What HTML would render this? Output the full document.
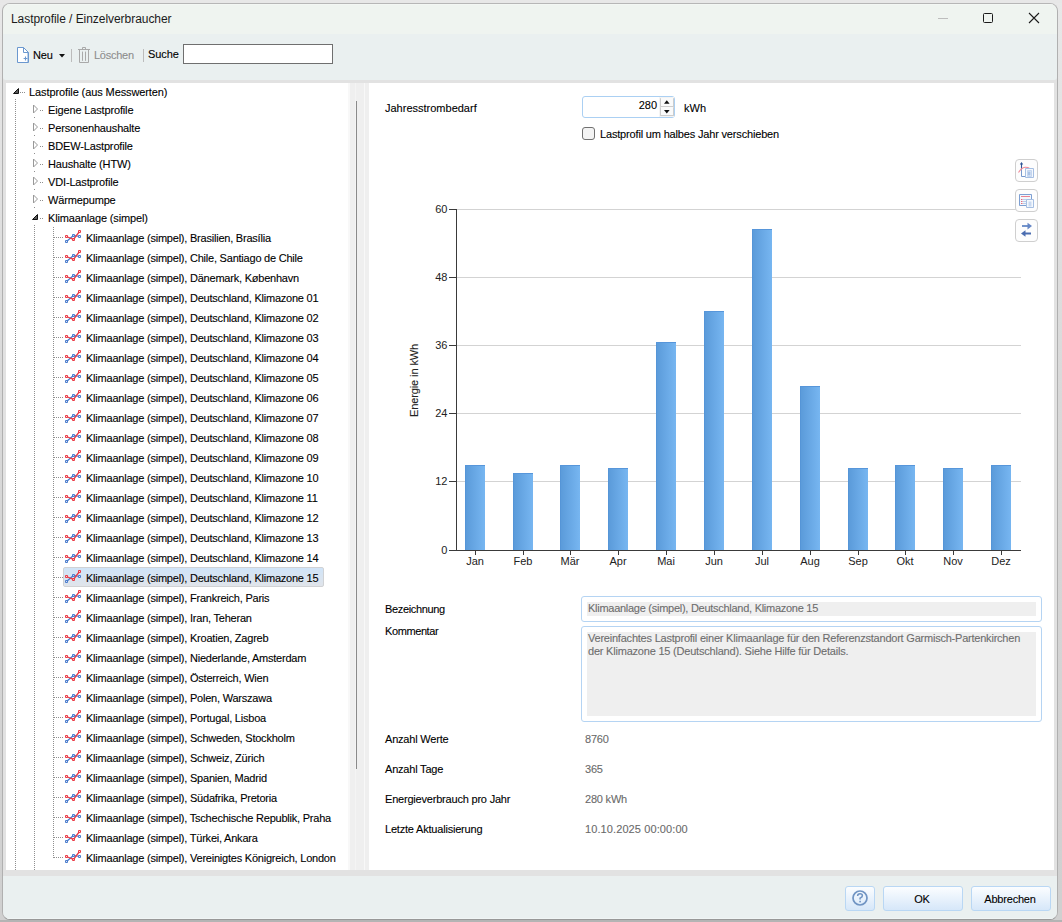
<!DOCTYPE html><html><head><meta charset="utf-8"><style>
*{margin:0;padding:0;box-sizing:border-box}
html,body{width:1062px;height:922px;overflow:hidden;background:linear-gradient(#e8e8e8 0px,#e4e4e4 90px,#d9d9d9 400px,#d0d0d0 900px);font-family:"Liberation Sans",sans-serif;font-size:11px;color:#000}
.a{position:absolute}
.t{position:absolute;white-space:nowrap;line-height:13px;font-size:11px;-webkit-text-stroke:0.1px currentColor}
.tr{letter-spacing:-0.22px}
.bar{position:absolute;width:20px;background:linear-gradient(to right,#4f8fd4 0px,#5b9bda 1px,#77b6f1 20px);border-top:1px solid #5796da}
.gl{position:absolute;left:457px;width:564px;height:1px;background:#d3d3d3}
.yt{position:absolute;left:449px;width:7px;height:1px;background:#3a3a3a}
.xt{position:absolute;top:551px;width:1px;height:4px;background:#3a3a3a}
.yl{position:absolute;width:30px;text-align:right;left:417px;font-size:11px;line-height:13px;color:#222;letter-spacing:-0.3px}
.xl{position:absolute;width:40px;text-align:center;top:555px;font-size:11px;line-height:13px;color:#222}
.cbtn{position:absolute;left:1015px;width:23px;height:23px;border:1px solid #cfcfcf;border-radius:4px;background:#fdfdfd}
.btn{position:absolute;top:886px;height:25px;border:1px solid #b9d7f4;border-radius:3px;background:linear-gradient(#fbfdff,#d6e7f9);text-align:center;line-height:25px;font-size:11px;color:#000;padding-right:2px;-webkit-text-stroke:0.1px currentColor}
.lbl{position:absolute;left:385px;white-space:nowrap;line-height:13px;-webkit-text-stroke:0.1px currentColor}
.val{position:absolute;left:585px;white-space:nowrap;line-height:13px;color:#6a6a6a;-webkit-text-stroke:0.1px currentColor}
</style></head><body>
<div class="a" style="left:0;top:0;width:1062px;height:3px;background:#e7e7e7"></div>
<div class="a" style="left:0;top:920px;width:1062px;height:2px;background:#b4b4b4"></div>
<div class="a" style="left:2px;top:3px;width:1056px;height:917px;border:1px solid #b0b0b0;border-top-color:#b6b6b6;border-bottom-color:#989898;border-radius:8px;background:#e2e2e2;overflow:hidden">
<div class="a" style="left:0;top:0;width:1054px;height:30px;background:#eff4f0;border-top:1px solid #f3f7f4"></div>
<div class="a" style="left:0;top:30px;width:1054px;height:46px;background:#eaf0f0;border-radius:0 0 3px 3px"></div>
<div class="a" style="left:0;top:872px;width:1054px;height:43px;background:#eaf0f0;border-bottom:1px solid #f0f5f5"></div>
</div>
<div class="t" style="left:11px;top:12px;font-size:12px;line-height:15px;color:#1b1b1b;letter-spacing:-0.05px;-webkit-text-stroke:0">Lastprofile / Einzelverbraucher</div>
<div class="a" style="left:938px;top:18px;width:10px;height:1px;background:#bdbdbd"></div>
<div class="a" style="left:983px;top:13px;width:10px;height:10px;border:1px solid #1b1b1b;border-radius:1.5px"></div>
<svg class="a" style="left:1028px;top:12px" width="12" height="12" viewBox="0 0 12 12"><path d="M1 1L11 11M11 1L1 11" stroke="#1b1b1b" stroke-width="1.1"/></svg>
<svg class="a" style="left:17px;top:47px" width="13" height="16" viewBox="0 0 13 16"><path d="M0.5 0.5H6.5L11.5 5.5V15.5H0.5Z" fill="#fff" stroke="#6b98cf" stroke-width="1" stroke-linejoin="round"/><path d="M10.5 6V15" stroke="#b9cfea" stroke-width="1"/><path d="M6.5 0.5V5.5H11.5" fill="none" stroke="#6b98cf" stroke-width="1"/><path d="M8.5 9.6V13.4M6.6 11.5H10.4" stroke="#6b98cf" stroke-width="1.1"/></svg>
<div class="t" style="left:33px;top:49px;letter-spacing:-0.2px">Neu</div>
<svg class="a" style="left:59px;top:54px" width="6" height="4" viewBox="0 0 6 4"><path d="M0 0H6L3 3.5Z" fill="#111"/></svg>
<div class="a" style="left:71px;top:49px;width:1px;height:13px;background:#bcbcbc"></div>
<svg class="a" style="left:78px;top:47px" width="12" height="16" viewBox="0 0 12 16"><path d="M4.5 2.5V0.5H7.5V2.5M0 2.5H12M1.5 2.5V15.5H10.5V2.5M4.5 4.6V13.8M7.5 4.6V13.8" fill="none" stroke="#a9a9a9" stroke-width="1"/></svg>
<div class="t" style="left:94px;top:49px;color:#8d8d8d;letter-spacing:-0.25px">Löschen</div>
<div class="a" style="left:143px;top:49px;width:1px;height:13px;background:#bcbcbc"></div>
<div class="t" style="left:148px;top:48px;letter-spacing:-0.1px">Suche</div>
<div class="a" style="left:183px;top:44px;width:150px;height:20px;border:1px solid #6f6f6f;background:#fff"></div>
<div class="a" style="left:6px;top:83px;width:342px;height:787px;background:#fff"></div>
<div class="a" style="left:348px;top:83px;width:21px;height:787px;background:#efefef;border-left:2px solid #f8f8f8"></div>
<div class="a" style="left:355px;top:83px;width:1px;height:787px;background:#f4f4f4"></div>
<div class="a" style="left:364px;top:83px;width:1px;height:787px;background:#f8f8f8"></div>
<div class="a" style="left:356px;top:101px;width:1px;height:668px;background:#8a8a8a"></div>
<div class="a" style="left:369px;top:83px;width:685px;height:787px;background:#fff"></div>
<svg class="a" style="left:0;top:0" width="400" height="880"><path fill="#8f8f8f" d="M15 99h1v1h-1zM15 101h1v1h-1zM15 103h1v1h-1zM15 105h1v1h-1zM15 107h1v1h-1zM15 109h1v1h-1zM15 111h1v1h-1zM15 113h1v1h-1zM15 115h1v1h-1zM15 117h1v1h-1zM15 119h1v1h-1zM15 121h1v1h-1zM15 123h1v1h-1zM15 125h1v1h-1zM15 127h1v1h-1zM15 129h1v1h-1zM15 131h1v1h-1zM15 133h1v1h-1zM15 135h1v1h-1zM15 137h1v1h-1zM15 139h1v1h-1zM15 141h1v1h-1zM15 143h1v1h-1zM15 145h1v1h-1zM15 147h1v1h-1zM15 149h1v1h-1zM15 151h1v1h-1zM15 153h1v1h-1zM15 155h1v1h-1zM15 157h1v1h-1zM15 159h1v1h-1zM15 161h1v1h-1zM15 163h1v1h-1zM15 165h1v1h-1zM15 167h1v1h-1zM15 169h1v1h-1zM15 171h1v1h-1zM15 173h1v1h-1zM15 175h1v1h-1zM15 177h1v1h-1zM15 179h1v1h-1zM15 181h1v1h-1zM15 183h1v1h-1zM15 185h1v1h-1zM15 187h1v1h-1zM15 189h1v1h-1zM15 191h1v1h-1zM15 193h1v1h-1zM15 195h1v1h-1zM15 197h1v1h-1zM15 199h1v1h-1zM15 201h1v1h-1zM15 203h1v1h-1zM15 205h1v1h-1zM15 207h1v1h-1zM15 209h1v1h-1zM15 211h1v1h-1zM15 213h1v1h-1zM15 215h1v1h-1zM15 217h1v1h-1zM15 219h1v1h-1zM15 221h1v1h-1zM15 223h1v1h-1zM15 225h1v1h-1zM15 227h1v1h-1zM15 229h1v1h-1zM15 231h1v1h-1zM15 233h1v1h-1zM15 235h1v1h-1zM15 237h1v1h-1zM15 239h1v1h-1zM15 241h1v1h-1zM15 243h1v1h-1zM15 245h1v1h-1zM15 247h1v1h-1zM15 249h1v1h-1zM15 251h1v1h-1zM15 253h1v1h-1zM15 255h1v1h-1zM15 257h1v1h-1zM15 259h1v1h-1zM15 261h1v1h-1zM15 263h1v1h-1zM15 265h1v1h-1zM15 267h1v1h-1zM15 269h1v1h-1zM15 271h1v1h-1zM15 273h1v1h-1zM15 275h1v1h-1zM15 277h1v1h-1zM15 279h1v1h-1zM15 281h1v1h-1zM15 283h1v1h-1zM15 285h1v1h-1zM15 287h1v1h-1zM15 289h1v1h-1zM15 291h1v1h-1zM15 293h1v1h-1zM15 295h1v1h-1zM15 297h1v1h-1zM15 299h1v1h-1zM15 301h1v1h-1zM15 303h1v1h-1zM15 305h1v1h-1zM15 307h1v1h-1zM15 309h1v1h-1zM15 311h1v1h-1zM15 313h1v1h-1zM15 315h1v1h-1zM15 317h1v1h-1zM15 319h1v1h-1zM15 321h1v1h-1zM15 323h1v1h-1zM15 325h1v1h-1zM15 327h1v1h-1zM15 329h1v1h-1zM15 331h1v1h-1zM15 333h1v1h-1zM15 335h1v1h-1zM15 337h1v1h-1zM15 339h1v1h-1zM15 341h1v1h-1zM15 343h1v1h-1zM15 345h1v1h-1zM15 347h1v1h-1zM15 349h1v1h-1zM15 351h1v1h-1zM15 353h1v1h-1zM15 355h1v1h-1zM15 357h1v1h-1zM15 359h1v1h-1zM15 361h1v1h-1zM15 363h1v1h-1zM15 365h1v1h-1zM15 367h1v1h-1zM15 369h1v1h-1zM15 371h1v1h-1zM15 373h1v1h-1zM15 375h1v1h-1zM15 377h1v1h-1zM15 379h1v1h-1zM15 381h1v1h-1zM15 383h1v1h-1zM15 385h1v1h-1zM15 387h1v1h-1zM15 389h1v1h-1zM15 391h1v1h-1zM15 393h1v1h-1zM15 395h1v1h-1zM15 397h1v1h-1zM15 399h1v1h-1zM15 401h1v1h-1zM15 403h1v1h-1zM15 405h1v1h-1zM15 407h1v1h-1zM15 409h1v1h-1zM15 411h1v1h-1zM15 413h1v1h-1zM15 415h1v1h-1zM15 417h1v1h-1zM15 419h1v1h-1zM15 421h1v1h-1zM15 423h1v1h-1zM15 425h1v1h-1zM15 427h1v1h-1zM15 429h1v1h-1zM15 431h1v1h-1zM15 433h1v1h-1zM15 435h1v1h-1zM15 437h1v1h-1zM15 439h1v1h-1zM15 441h1v1h-1zM15 443h1v1h-1zM15 445h1v1h-1zM15 447h1v1h-1zM15 449h1v1h-1zM15 451h1v1h-1zM15 453h1v1h-1zM15 455h1v1h-1zM15 457h1v1h-1zM15 459h1v1h-1zM15 461h1v1h-1zM15 463h1v1h-1zM15 465h1v1h-1zM15 467h1v1h-1zM15 469h1v1h-1zM15 471h1v1h-1zM15 473h1v1h-1zM15 475h1v1h-1zM15 477h1v1h-1zM15 479h1v1h-1zM15 481h1v1h-1zM15 483h1v1h-1zM15 485h1v1h-1zM15 487h1v1h-1zM15 489h1v1h-1zM15 491h1v1h-1zM15 493h1v1h-1zM15 495h1v1h-1zM15 497h1v1h-1zM15 499h1v1h-1zM15 501h1v1h-1zM15 503h1v1h-1zM15 505h1v1h-1zM15 507h1v1h-1zM15 509h1v1h-1zM15 511h1v1h-1zM15 513h1v1h-1zM15 515h1v1h-1zM15 517h1v1h-1zM15 519h1v1h-1zM15 521h1v1h-1zM15 523h1v1h-1zM15 525h1v1h-1zM15 527h1v1h-1zM15 529h1v1h-1zM15 531h1v1h-1zM15 533h1v1h-1zM15 535h1v1h-1zM15 537h1v1h-1zM15 539h1v1h-1zM15 541h1v1h-1zM15 543h1v1h-1zM15 545h1v1h-1zM15 547h1v1h-1zM15 549h1v1h-1zM15 551h1v1h-1zM15 553h1v1h-1zM15 555h1v1h-1zM15 557h1v1h-1zM15 559h1v1h-1zM15 561h1v1h-1zM15 563h1v1h-1zM15 565h1v1h-1zM15 567h1v1h-1zM15 569h1v1h-1zM15 571h1v1h-1zM15 573h1v1h-1zM15 575h1v1h-1zM15 577h1v1h-1zM15 579h1v1h-1zM15 581h1v1h-1zM15 583h1v1h-1zM15 585h1v1h-1zM15 587h1v1h-1zM15 589h1v1h-1zM15 591h1v1h-1zM15 593h1v1h-1zM15 595h1v1h-1zM15 597h1v1h-1zM15 599h1v1h-1zM15 601h1v1h-1zM15 603h1v1h-1zM15 605h1v1h-1zM15 607h1v1h-1zM15 609h1v1h-1zM15 611h1v1h-1zM15 613h1v1h-1zM15 615h1v1h-1zM15 617h1v1h-1zM15 619h1v1h-1zM15 621h1v1h-1zM15 623h1v1h-1zM15 625h1v1h-1zM15 627h1v1h-1zM15 629h1v1h-1zM15 631h1v1h-1zM15 633h1v1h-1zM15 635h1v1h-1zM15 637h1v1h-1zM15 639h1v1h-1zM15 641h1v1h-1zM15 643h1v1h-1zM15 645h1v1h-1zM15 647h1v1h-1zM15 649h1v1h-1zM15 651h1v1h-1zM15 653h1v1h-1zM15 655h1v1h-1zM15 657h1v1h-1zM15 659h1v1h-1zM15 661h1v1h-1zM15 663h1v1h-1zM15 665h1v1h-1zM15 667h1v1h-1zM15 669h1v1h-1zM15 671h1v1h-1zM15 673h1v1h-1zM15 675h1v1h-1zM15 677h1v1h-1zM15 679h1v1h-1zM15 681h1v1h-1zM15 683h1v1h-1zM15 685h1v1h-1zM15 687h1v1h-1zM15 689h1v1h-1zM15 691h1v1h-1zM15 693h1v1h-1zM15 695h1v1h-1zM15 697h1v1h-1zM15 699h1v1h-1zM15 701h1v1h-1zM15 703h1v1h-1zM15 705h1v1h-1zM15 707h1v1h-1zM15 709h1v1h-1zM15 711h1v1h-1zM15 713h1v1h-1zM15 715h1v1h-1zM15 717h1v1h-1zM15 719h1v1h-1zM15 721h1v1h-1zM15 723h1v1h-1zM15 725h1v1h-1zM15 727h1v1h-1zM15 729h1v1h-1zM15 731h1v1h-1zM15 733h1v1h-1zM15 735h1v1h-1zM15 737h1v1h-1zM15 739h1v1h-1zM15 741h1v1h-1zM15 743h1v1h-1zM15 745h1v1h-1zM15 747h1v1h-1zM15 749h1v1h-1zM15 751h1v1h-1zM15 753h1v1h-1zM15 755h1v1h-1zM15 757h1v1h-1zM15 759h1v1h-1zM15 761h1v1h-1zM15 763h1v1h-1zM15 765h1v1h-1zM15 767h1v1h-1zM15 769h1v1h-1zM15 771h1v1h-1zM15 773h1v1h-1zM15 775h1v1h-1zM15 777h1v1h-1zM15 779h1v1h-1zM15 781h1v1h-1zM15 783h1v1h-1zM15 785h1v1h-1zM15 787h1v1h-1zM15 789h1v1h-1zM15 791h1v1h-1zM15 793h1v1h-1zM15 795h1v1h-1zM15 797h1v1h-1zM15 799h1v1h-1zM15 801h1v1h-1zM15 803h1v1h-1zM15 805h1v1h-1zM15 807h1v1h-1zM15 809h1v1h-1zM15 811h1v1h-1zM15 813h1v1h-1zM15 815h1v1h-1zM15 817h1v1h-1zM15 819h1v1h-1zM15 821h1v1h-1zM15 823h1v1h-1zM15 825h1v1h-1zM15 827h1v1h-1zM15 829h1v1h-1zM15 831h1v1h-1zM15 833h1v1h-1zM15 835h1v1h-1zM15 837h1v1h-1zM15 839h1v1h-1zM15 841h1v1h-1zM15 843h1v1h-1zM15 845h1v1h-1zM15 847h1v1h-1zM15 849h1v1h-1zM15 851h1v1h-1zM15 853h1v1h-1zM15 855h1v1h-1zM15 857h1v1h-1zM15 859h1v1h-1zM15 861h1v1h-1zM15 863h1v1h-1zM15 865h1v1h-1zM15 867h1v1h-1zM15 869h1v1h-1zM34 225h1v1h-1zM34 227h1v1h-1zM34 229h1v1h-1zM34 231h1v1h-1zM34 233h1v1h-1zM34 235h1v1h-1zM34 237h1v1h-1zM34 239h1v1h-1zM34 241h1v1h-1zM34 243h1v1h-1zM34 245h1v1h-1zM34 247h1v1h-1zM34 249h1v1h-1zM34 251h1v1h-1zM34 253h1v1h-1zM34 255h1v1h-1zM34 257h1v1h-1zM34 259h1v1h-1zM34 261h1v1h-1zM34 263h1v1h-1zM34 265h1v1h-1zM34 267h1v1h-1zM34 269h1v1h-1zM34 271h1v1h-1zM34 273h1v1h-1zM34 275h1v1h-1zM34 277h1v1h-1zM34 279h1v1h-1zM34 281h1v1h-1zM34 283h1v1h-1zM34 285h1v1h-1zM34 287h1v1h-1zM34 289h1v1h-1zM34 291h1v1h-1zM34 293h1v1h-1zM34 295h1v1h-1zM34 297h1v1h-1zM34 299h1v1h-1zM34 301h1v1h-1zM34 303h1v1h-1zM34 305h1v1h-1zM34 307h1v1h-1zM34 309h1v1h-1zM34 311h1v1h-1zM34 313h1v1h-1zM34 315h1v1h-1zM34 317h1v1h-1zM34 319h1v1h-1zM34 321h1v1h-1zM34 323h1v1h-1zM34 325h1v1h-1zM34 327h1v1h-1zM34 329h1v1h-1zM34 331h1v1h-1zM34 333h1v1h-1zM34 335h1v1h-1zM34 337h1v1h-1zM34 339h1v1h-1zM34 341h1v1h-1zM34 343h1v1h-1zM34 345h1v1h-1zM34 347h1v1h-1zM34 349h1v1h-1zM34 351h1v1h-1zM34 353h1v1h-1zM34 355h1v1h-1zM34 357h1v1h-1zM34 359h1v1h-1zM34 361h1v1h-1zM34 363h1v1h-1zM34 365h1v1h-1zM34 367h1v1h-1zM34 369h1v1h-1zM34 371h1v1h-1zM34 373h1v1h-1zM34 375h1v1h-1zM34 377h1v1h-1zM34 379h1v1h-1zM34 381h1v1h-1zM34 383h1v1h-1zM34 385h1v1h-1zM34 387h1v1h-1zM34 389h1v1h-1zM34 391h1v1h-1zM34 393h1v1h-1zM34 395h1v1h-1zM34 397h1v1h-1zM34 399h1v1h-1zM34 401h1v1h-1zM34 403h1v1h-1zM34 405h1v1h-1zM34 407h1v1h-1zM34 409h1v1h-1zM34 411h1v1h-1zM34 413h1v1h-1zM34 415h1v1h-1zM34 417h1v1h-1zM34 419h1v1h-1zM34 421h1v1h-1zM34 423h1v1h-1zM34 425h1v1h-1zM34 427h1v1h-1zM34 429h1v1h-1zM34 431h1v1h-1zM34 433h1v1h-1zM34 435h1v1h-1zM34 437h1v1h-1zM34 439h1v1h-1zM34 441h1v1h-1zM34 443h1v1h-1zM34 445h1v1h-1zM34 447h1v1h-1zM34 449h1v1h-1zM34 451h1v1h-1zM34 453h1v1h-1zM34 455h1v1h-1zM34 457h1v1h-1zM34 459h1v1h-1zM34 461h1v1h-1zM34 463h1v1h-1zM34 465h1v1h-1zM34 467h1v1h-1zM34 469h1v1h-1zM34 471h1v1h-1zM34 473h1v1h-1zM34 475h1v1h-1zM34 477h1v1h-1zM34 479h1v1h-1zM34 481h1v1h-1zM34 483h1v1h-1zM34 485h1v1h-1zM34 487h1v1h-1zM34 489h1v1h-1zM34 491h1v1h-1zM34 493h1v1h-1zM34 495h1v1h-1zM34 497h1v1h-1zM34 499h1v1h-1zM34 501h1v1h-1zM34 503h1v1h-1zM34 505h1v1h-1zM34 507h1v1h-1zM34 509h1v1h-1zM34 511h1v1h-1zM34 513h1v1h-1zM34 515h1v1h-1zM34 517h1v1h-1zM34 519h1v1h-1zM34 521h1v1h-1zM34 523h1v1h-1zM34 525h1v1h-1zM34 527h1v1h-1zM34 529h1v1h-1zM34 531h1v1h-1zM34 533h1v1h-1zM34 535h1v1h-1zM34 537h1v1h-1zM34 539h1v1h-1zM34 541h1v1h-1zM34 543h1v1h-1zM34 545h1v1h-1zM34 547h1v1h-1zM34 549h1v1h-1zM34 551h1v1h-1zM34 553h1v1h-1zM34 555h1v1h-1zM34 557h1v1h-1zM34 559h1v1h-1zM34 561h1v1h-1zM34 563h1v1h-1zM34 565h1v1h-1zM34 567h1v1h-1zM34 569h1v1h-1zM34 571h1v1h-1zM34 573h1v1h-1zM34 575h1v1h-1zM34 577h1v1h-1zM34 579h1v1h-1zM34 581h1v1h-1zM34 583h1v1h-1zM34 585h1v1h-1zM34 587h1v1h-1zM34 589h1v1h-1zM34 591h1v1h-1zM34 593h1v1h-1zM34 595h1v1h-1zM34 597h1v1h-1zM34 599h1v1h-1zM34 601h1v1h-1zM34 603h1v1h-1zM34 605h1v1h-1zM34 607h1v1h-1zM34 609h1v1h-1zM34 611h1v1h-1zM34 613h1v1h-1zM34 615h1v1h-1zM34 617h1v1h-1zM34 619h1v1h-1zM34 621h1v1h-1zM34 623h1v1h-1zM34 625h1v1h-1zM34 627h1v1h-1zM34 629h1v1h-1zM34 631h1v1h-1zM34 633h1v1h-1zM34 635h1v1h-1zM34 637h1v1h-1zM34 639h1v1h-1zM34 641h1v1h-1zM34 643h1v1h-1zM34 645h1v1h-1zM34 647h1v1h-1zM34 649h1v1h-1zM34 651h1v1h-1zM34 653h1v1h-1zM34 655h1v1h-1zM34 657h1v1h-1zM34 659h1v1h-1zM34 661h1v1h-1zM34 663h1v1h-1zM34 665h1v1h-1zM34 667h1v1h-1zM34 669h1v1h-1zM34 671h1v1h-1zM34 673h1v1h-1zM34 675h1v1h-1zM34 677h1v1h-1zM34 679h1v1h-1zM34 681h1v1h-1zM34 683h1v1h-1zM34 685h1v1h-1zM34 687h1v1h-1zM34 689h1v1h-1zM34 691h1v1h-1zM34 693h1v1h-1zM34 695h1v1h-1zM34 697h1v1h-1zM34 699h1v1h-1zM34 701h1v1h-1zM34 703h1v1h-1zM34 705h1v1h-1zM34 707h1v1h-1zM34 709h1v1h-1zM34 711h1v1h-1zM34 713h1v1h-1zM34 715h1v1h-1zM34 717h1v1h-1zM34 719h1v1h-1zM34 721h1v1h-1zM34 723h1v1h-1zM34 725h1v1h-1zM34 727h1v1h-1zM34 729h1v1h-1zM34 731h1v1h-1zM34 733h1v1h-1zM34 735h1v1h-1zM34 737h1v1h-1zM34 739h1v1h-1zM34 741h1v1h-1zM34 743h1v1h-1zM34 745h1v1h-1zM34 747h1v1h-1zM34 749h1v1h-1zM34 751h1v1h-1zM34 753h1v1h-1zM34 755h1v1h-1zM34 757h1v1h-1zM34 759h1v1h-1zM34 761h1v1h-1zM34 763h1v1h-1zM34 765h1v1h-1zM34 767h1v1h-1zM34 769h1v1h-1zM34 771h1v1h-1zM34 773h1v1h-1zM34 775h1v1h-1zM34 777h1v1h-1zM34 779h1v1h-1zM34 781h1v1h-1zM34 783h1v1h-1zM34 785h1v1h-1zM34 787h1v1h-1zM34 789h1v1h-1zM34 791h1v1h-1zM34 793h1v1h-1zM34 795h1v1h-1zM34 797h1v1h-1zM34 799h1v1h-1zM34 801h1v1h-1zM34 803h1v1h-1zM34 805h1v1h-1zM34 807h1v1h-1zM34 809h1v1h-1zM34 811h1v1h-1zM34 813h1v1h-1zM34 815h1v1h-1zM34 817h1v1h-1zM34 819h1v1h-1zM34 821h1v1h-1zM34 823h1v1h-1zM34 825h1v1h-1zM34 827h1v1h-1zM34 829h1v1h-1zM34 831h1v1h-1zM34 833h1v1h-1zM34 835h1v1h-1zM34 837h1v1h-1zM34 839h1v1h-1zM34 841h1v1h-1zM34 843h1v1h-1zM34 845h1v1h-1zM34 847h1v1h-1zM34 849h1v1h-1zM34 851h1v1h-1zM34 853h1v1h-1zM34 855h1v1h-1zM34 857h1v1h-1zM34 859h1v1h-1zM34 861h1v1h-1zM34 863h1v1h-1zM34 865h1v1h-1zM34 867h1v1h-1zM34 869h1v1h-1zM53 227h1v1h-1zM53 229h1v1h-1zM53 231h1v1h-1zM53 233h1v1h-1zM53 235h1v1h-1zM53 237h1v1h-1zM53 239h1v1h-1zM53 241h1v1h-1zM53 243h1v1h-1zM53 245h1v1h-1zM53 247h1v1h-1zM53 249h1v1h-1zM53 251h1v1h-1zM53 253h1v1h-1zM53 255h1v1h-1zM53 257h1v1h-1zM53 259h1v1h-1zM53 261h1v1h-1zM53 263h1v1h-1zM53 265h1v1h-1zM53 267h1v1h-1zM53 269h1v1h-1zM53 271h1v1h-1zM53 273h1v1h-1zM53 275h1v1h-1zM53 277h1v1h-1zM53 279h1v1h-1zM53 281h1v1h-1zM53 283h1v1h-1zM53 285h1v1h-1zM53 287h1v1h-1zM53 289h1v1h-1zM53 291h1v1h-1zM53 293h1v1h-1zM53 295h1v1h-1zM53 297h1v1h-1zM53 299h1v1h-1zM53 301h1v1h-1zM53 303h1v1h-1zM53 305h1v1h-1zM53 307h1v1h-1zM53 309h1v1h-1zM53 311h1v1h-1zM53 313h1v1h-1zM53 315h1v1h-1zM53 317h1v1h-1zM53 319h1v1h-1zM53 321h1v1h-1zM53 323h1v1h-1zM53 325h1v1h-1zM53 327h1v1h-1zM53 329h1v1h-1zM53 331h1v1h-1zM53 333h1v1h-1zM53 335h1v1h-1zM53 337h1v1h-1zM53 339h1v1h-1zM53 341h1v1h-1zM53 343h1v1h-1zM53 345h1v1h-1zM53 347h1v1h-1zM53 349h1v1h-1zM53 351h1v1h-1zM53 353h1v1h-1zM53 355h1v1h-1zM53 357h1v1h-1zM53 359h1v1h-1zM53 361h1v1h-1zM53 363h1v1h-1zM53 365h1v1h-1zM53 367h1v1h-1zM53 369h1v1h-1zM53 371h1v1h-1zM53 373h1v1h-1zM53 375h1v1h-1zM53 377h1v1h-1zM53 379h1v1h-1zM53 381h1v1h-1zM53 383h1v1h-1zM53 385h1v1h-1zM53 387h1v1h-1zM53 389h1v1h-1zM53 391h1v1h-1zM53 393h1v1h-1zM53 395h1v1h-1zM53 397h1v1h-1zM53 399h1v1h-1zM53 401h1v1h-1zM53 403h1v1h-1zM53 405h1v1h-1zM53 407h1v1h-1zM53 409h1v1h-1zM53 411h1v1h-1zM53 413h1v1h-1zM53 415h1v1h-1zM53 417h1v1h-1zM53 419h1v1h-1zM53 421h1v1h-1zM53 423h1v1h-1zM53 425h1v1h-1zM53 427h1v1h-1zM53 429h1v1h-1zM53 431h1v1h-1zM53 433h1v1h-1zM53 435h1v1h-1zM53 437h1v1h-1zM53 439h1v1h-1zM53 441h1v1h-1zM53 443h1v1h-1zM53 445h1v1h-1zM53 447h1v1h-1zM53 449h1v1h-1zM53 451h1v1h-1zM53 453h1v1h-1zM53 455h1v1h-1zM53 457h1v1h-1zM53 459h1v1h-1zM53 461h1v1h-1zM53 463h1v1h-1zM53 465h1v1h-1zM53 467h1v1h-1zM53 469h1v1h-1zM53 471h1v1h-1zM53 473h1v1h-1zM53 475h1v1h-1zM53 477h1v1h-1zM53 479h1v1h-1zM53 481h1v1h-1zM53 483h1v1h-1zM53 485h1v1h-1zM53 487h1v1h-1zM53 489h1v1h-1zM53 491h1v1h-1zM53 493h1v1h-1zM53 495h1v1h-1zM53 497h1v1h-1zM53 499h1v1h-1zM53 501h1v1h-1zM53 503h1v1h-1zM53 505h1v1h-1zM53 507h1v1h-1zM53 509h1v1h-1zM53 511h1v1h-1zM53 513h1v1h-1zM53 515h1v1h-1zM53 517h1v1h-1zM53 519h1v1h-1zM53 521h1v1h-1zM53 523h1v1h-1zM53 525h1v1h-1zM53 527h1v1h-1zM53 529h1v1h-1zM53 531h1v1h-1zM53 533h1v1h-1zM53 535h1v1h-1zM53 537h1v1h-1zM53 539h1v1h-1zM53 541h1v1h-1zM53 543h1v1h-1zM53 545h1v1h-1zM53 547h1v1h-1zM53 549h1v1h-1zM53 551h1v1h-1zM53 553h1v1h-1zM53 555h1v1h-1zM53 557h1v1h-1zM53 559h1v1h-1zM53 561h1v1h-1zM53 563h1v1h-1zM53 565h1v1h-1zM53 567h1v1h-1zM53 569h1v1h-1zM53 571h1v1h-1zM53 573h1v1h-1zM53 575h1v1h-1zM53 577h1v1h-1zM53 579h1v1h-1zM53 581h1v1h-1zM53 583h1v1h-1zM53 585h1v1h-1zM53 587h1v1h-1zM53 589h1v1h-1zM53 591h1v1h-1zM53 593h1v1h-1zM53 595h1v1h-1zM53 597h1v1h-1zM53 599h1v1h-1zM53 601h1v1h-1zM53 603h1v1h-1zM53 605h1v1h-1zM53 607h1v1h-1zM53 609h1v1h-1zM53 611h1v1h-1zM53 613h1v1h-1zM53 615h1v1h-1zM53 617h1v1h-1zM53 619h1v1h-1zM53 621h1v1h-1zM53 623h1v1h-1zM53 625h1v1h-1zM53 627h1v1h-1zM53 629h1v1h-1zM53 631h1v1h-1zM53 633h1v1h-1zM53 635h1v1h-1zM53 637h1v1h-1zM53 639h1v1h-1zM53 641h1v1h-1zM53 643h1v1h-1zM53 645h1v1h-1zM53 647h1v1h-1zM53 649h1v1h-1zM53 651h1v1h-1zM53 653h1v1h-1zM53 655h1v1h-1zM53 657h1v1h-1zM53 659h1v1h-1zM53 661h1v1h-1zM53 663h1v1h-1zM53 665h1v1h-1zM53 667h1v1h-1zM53 669h1v1h-1zM53 671h1v1h-1zM53 673h1v1h-1zM53 675h1v1h-1zM53 677h1v1h-1zM53 679h1v1h-1zM53 681h1v1h-1zM53 683h1v1h-1zM53 685h1v1h-1zM53 687h1v1h-1zM53 689h1v1h-1zM53 691h1v1h-1zM53 693h1v1h-1zM53 695h1v1h-1zM53 697h1v1h-1zM53 699h1v1h-1zM53 701h1v1h-1zM53 703h1v1h-1zM53 705h1v1h-1zM53 707h1v1h-1zM53 709h1v1h-1zM53 711h1v1h-1zM53 713h1v1h-1zM53 715h1v1h-1zM53 717h1v1h-1zM53 719h1v1h-1zM53 721h1v1h-1zM53 723h1v1h-1zM53 725h1v1h-1zM53 727h1v1h-1zM53 729h1v1h-1zM53 731h1v1h-1zM53 733h1v1h-1zM53 735h1v1h-1zM53 737h1v1h-1zM53 739h1v1h-1zM53 741h1v1h-1zM53 743h1v1h-1zM53 745h1v1h-1zM53 747h1v1h-1zM53 749h1v1h-1zM53 751h1v1h-1zM53 753h1v1h-1zM53 755h1v1h-1zM53 757h1v1h-1zM53 759h1v1h-1zM53 761h1v1h-1zM53 763h1v1h-1zM53 765h1v1h-1zM53 767h1v1h-1zM53 769h1v1h-1zM53 771h1v1h-1zM53 773h1v1h-1zM53 775h1v1h-1zM53 777h1v1h-1zM53 779h1v1h-1zM53 781h1v1h-1zM53 783h1v1h-1zM53 785h1v1h-1zM53 787h1v1h-1zM53 789h1v1h-1zM53 791h1v1h-1zM53 793h1v1h-1zM53 795h1v1h-1zM53 797h1v1h-1zM53 799h1v1h-1zM53 801h1v1h-1zM53 803h1v1h-1zM53 805h1v1h-1zM53 807h1v1h-1zM53 809h1v1h-1zM53 811h1v1h-1zM53 813h1v1h-1zM53 815h1v1h-1zM53 817h1v1h-1zM53 819h1v1h-1zM53 821h1v1h-1zM53 823h1v1h-1zM53 825h1v1h-1zM53 827h1v1h-1zM53 829h1v1h-1zM53 831h1v1h-1zM53 833h1v1h-1zM53 835h1v1h-1zM53 837h1v1h-1zM53 839h1v1h-1zM53 841h1v1h-1zM53 843h1v1h-1zM53 845h1v1h-1zM53 847h1v1h-1zM53 849h1v1h-1zM53 851h1v1h-1zM53 853h1v1h-1zM53 855h1v1h-1zM53 857h1v1h-1zM20 92h1v1h-1zM22 92h1v1h-1zM24 92h1v1h-1zM40 110h1v1h-1zM42 110h1v1h-1zM34 117h1v1h-1zM40 128h1v1h-1zM42 128h1v1h-1zM34 135h1v1h-1zM40 146h1v1h-1zM42 146h1v1h-1zM34 153h1v1h-1zM40 164h1v1h-1zM42 164h1v1h-1zM34 171h1v1h-1zM40 182h1v1h-1zM42 182h1v1h-1zM34 189h1v1h-1zM40 200h1v1h-1zM42 200h1v1h-1zM34 207h1v1h-1zM40 218h1v1h-1zM42 218h1v1h-1zM54 237h1v1h-1zM56 237h1v1h-1zM58 237h1v1h-1zM60 237h1v1h-1zM62 237h1v1h-1zM54 257h1v1h-1zM56 257h1v1h-1zM58 257h1v1h-1zM60 257h1v1h-1zM62 257h1v1h-1zM54 277h1v1h-1zM56 277h1v1h-1zM58 277h1v1h-1zM60 277h1v1h-1zM62 277h1v1h-1zM54 297h1v1h-1zM56 297h1v1h-1zM58 297h1v1h-1zM60 297h1v1h-1zM62 297h1v1h-1zM54 317h1v1h-1zM56 317h1v1h-1zM58 317h1v1h-1zM60 317h1v1h-1zM62 317h1v1h-1zM54 337h1v1h-1zM56 337h1v1h-1zM58 337h1v1h-1zM60 337h1v1h-1zM62 337h1v1h-1zM54 357h1v1h-1zM56 357h1v1h-1zM58 357h1v1h-1zM60 357h1v1h-1zM62 357h1v1h-1zM54 377h1v1h-1zM56 377h1v1h-1zM58 377h1v1h-1zM60 377h1v1h-1zM62 377h1v1h-1zM54 397h1v1h-1zM56 397h1v1h-1zM58 397h1v1h-1zM60 397h1v1h-1zM62 397h1v1h-1zM54 417h1v1h-1zM56 417h1v1h-1zM58 417h1v1h-1zM60 417h1v1h-1zM62 417h1v1h-1zM54 437h1v1h-1zM56 437h1v1h-1zM58 437h1v1h-1zM60 437h1v1h-1zM62 437h1v1h-1zM54 457h1v1h-1zM56 457h1v1h-1zM58 457h1v1h-1zM60 457h1v1h-1zM62 457h1v1h-1zM54 477h1v1h-1zM56 477h1v1h-1zM58 477h1v1h-1zM60 477h1v1h-1zM62 477h1v1h-1zM54 497h1v1h-1zM56 497h1v1h-1zM58 497h1v1h-1zM60 497h1v1h-1zM62 497h1v1h-1zM54 517h1v1h-1zM56 517h1v1h-1zM58 517h1v1h-1zM60 517h1v1h-1zM62 517h1v1h-1zM54 537h1v1h-1zM56 537h1v1h-1zM58 537h1v1h-1zM60 537h1v1h-1zM62 537h1v1h-1zM54 557h1v1h-1zM56 557h1v1h-1zM58 557h1v1h-1zM60 557h1v1h-1zM62 557h1v1h-1zM54 577h1v1h-1zM56 577h1v1h-1zM58 577h1v1h-1zM60 577h1v1h-1zM62 577h1v1h-1zM54 597h1v1h-1zM56 597h1v1h-1zM58 597h1v1h-1zM60 597h1v1h-1zM62 597h1v1h-1zM54 617h1v1h-1zM56 617h1v1h-1zM58 617h1v1h-1zM60 617h1v1h-1zM62 617h1v1h-1zM54 637h1v1h-1zM56 637h1v1h-1zM58 637h1v1h-1zM60 637h1v1h-1zM62 637h1v1h-1zM54 657h1v1h-1zM56 657h1v1h-1zM58 657h1v1h-1zM60 657h1v1h-1zM62 657h1v1h-1zM54 677h1v1h-1zM56 677h1v1h-1zM58 677h1v1h-1zM60 677h1v1h-1zM62 677h1v1h-1zM54 697h1v1h-1zM56 697h1v1h-1zM58 697h1v1h-1zM60 697h1v1h-1zM62 697h1v1h-1zM54 717h1v1h-1zM56 717h1v1h-1zM58 717h1v1h-1zM60 717h1v1h-1zM62 717h1v1h-1zM54 737h1v1h-1zM56 737h1v1h-1zM58 737h1v1h-1zM60 737h1v1h-1zM62 737h1v1h-1zM54 757h1v1h-1zM56 757h1v1h-1zM58 757h1v1h-1zM60 757h1v1h-1zM62 757h1v1h-1zM54 777h1v1h-1zM56 777h1v1h-1zM58 777h1v1h-1zM60 777h1v1h-1zM62 777h1v1h-1zM54 797h1v1h-1zM56 797h1v1h-1zM58 797h1v1h-1zM60 797h1v1h-1zM62 797h1v1h-1zM54 817h1v1h-1zM56 817h1v1h-1zM58 817h1v1h-1zM60 817h1v1h-1zM62 817h1v1h-1zM54 837h1v1h-1zM56 837h1v1h-1zM58 837h1v1h-1zM60 837h1v1h-1zM62 837h1v1h-1zM54 857h1v1h-1zM56 857h1v1h-1zM58 857h1v1h-1zM60 857h1v1h-1zM62 857h1v1h-1z"/><path d="M18.5 88.5V93.5H13.5Z" fill="#5a5a5a" stroke="#111" stroke-width="1" stroke-linejoin="round"/><path d="M33.5 105.0L37.5 109.0L33.5 113.0Z" fill="none" stroke="#999" stroke-width="1"/><path d="M33.5 123.0L37.5 127.0L33.5 131.0Z" fill="none" stroke="#999" stroke-width="1"/><path d="M33.5 141.0L37.5 145.0L33.5 149.0Z" fill="none" stroke="#999" stroke-width="1"/><path d="M33.5 159.0L37.5 163.0L33.5 167.0Z" fill="none" stroke="#999" stroke-width="1"/><path d="M33.5 177.0L37.5 181.0L33.5 185.0Z" fill="none" stroke="#999" stroke-width="1"/><path d="M33.5 195.0L37.5 199.0L33.5 203.0Z" fill="none" stroke="#999" stroke-width="1"/><path d="M37.5 214.5V219.5H32.5Z" fill="#5a5a5a" stroke="#111" stroke-width="1" stroke-linejoin="round"/></svg>
<div class="t" style="left:29px;top:86px;letter-spacing:-0.1px">Lastprofile (aus Messwerten)</div>
<div class="t" style="left:48px;top:104px;letter-spacing:-0.15px">Eigene Lastprofile</div>
<div class="t" style="left:48px;top:122px;letter-spacing:-0.15px">Personenhaushalte</div>
<div class="t" style="left:48px;top:140px;letter-spacing:-0.15px">BDEW-Lastprofile</div>
<div class="t" style="left:48px;top:158px;letter-spacing:-0.15px">Haushalte (HTW)</div>
<div class="t" style="left:48px;top:176px;letter-spacing:-0.15px">VDI-Lastprofile</div>
<div class="t" style="left:48px;top:194px;letter-spacing:-0.15px">Wärmepumpe</div>
<div class="t" style="left:48px;top:212px;letter-spacing:-0.15px">Klimaanlage (simpel)</div>
<div class="a" style="left:63px;top:567px;width:261px;height:20px;border:1px solid #d0d2d5;border-radius:2px;background:linear-gradient(#d0e4f8,#e0e4ea)"></div>
<svg class="a" style="left:65px;top:230px" width="16" height="14" viewBox="0 0 16 14"><path d="M1.5 11.5L8.5 5.5L14.5 6.5" fill="none" stroke="#4a7ccd" stroke-width="1.25"/><path d="M1.5 6.5L8.5 9.5L14.5 1.5" fill="none" stroke="#ea3944" stroke-width="1.3"/><path d="M1 10h1v1h-1zM0 11h1v1h-1zM2 11h1v1h-1zM1 12h1v1h-1z" fill="#4a7ccd"/><path d="M0 10h1v1h-1zM2 10h1v1h-1zM0 12h1v1h-1zM2 12h1v1h-1z" fill="#4a7ccd" opacity="0.75"/><path d="M1 11h1v1h-1z" fill="#fff" opacity="0.65"/><path d="M8 4h1v1h-1zM7 5h1v1h-1zM9 5h1v1h-1zM8 6h1v1h-1z" fill="#4a7ccd"/><path d="M7 4h1v1h-1zM9 4h1v1h-1zM7 6h1v1h-1zM9 6h1v1h-1z" fill="#4a7ccd" opacity="0.75"/><path d="M8 5h1v1h-1z" fill="#fff" opacity="0.65"/><path d="M14 5h1v1h-1zM13 6h1v1h-1zM15 6h1v1h-1zM14 7h1v1h-1z" fill="#4a7ccd"/><path d="M13 5h1v1h-1zM15 5h1v1h-1zM13 7h1v1h-1zM15 7h1v1h-1z" fill="#4a7ccd" opacity="0.75"/><path d="M14 6h1v1h-1z" fill="#fff" opacity="0.65"/><path d="M1 5h1v1h-1zM0 6h1v1h-1zM2 6h1v1h-1zM1 7h1v1h-1z" fill="#ea3944"/><path d="M0 5h1v1h-1zM2 5h1v1h-1zM0 7h1v1h-1zM2 7h1v1h-1z" fill="#ea3944" opacity="0.75"/><path d="M1 6h1v1h-1z" fill="#fff" opacity="0.65"/><path d="M8 8h1v1h-1zM7 9h1v1h-1zM9 9h1v1h-1zM8 10h1v1h-1z" fill="#ea3944"/><path d="M7 8h1v1h-1zM9 8h1v1h-1zM7 10h1v1h-1zM9 10h1v1h-1z" fill="#ea3944" opacity="0.75"/><path d="M8 9h1v1h-1z" fill="#fff" opacity="0.65"/><path d="M14 0h1v1h-1zM13 1h1v1h-1zM15 1h1v1h-1zM14 2h1v1h-1z" fill="#ea3944"/><path d="M13 0h1v1h-1zM15 0h1v1h-1zM13 2h1v1h-1zM15 2h1v1h-1z" fill="#ea3944" opacity="0.75"/><path d="M14 1h1v1h-1z" fill="#fff" opacity="0.65"/></svg>
<div class="t tr" style="left:86px;top:232px">Klimaanlage (simpel), Brasilien, Brasília</div>
<svg class="a" style="left:65px;top:250px" width="16" height="14" viewBox="0 0 16 14"><path d="M1.5 11.5L8.5 5.5L14.5 6.5" fill="none" stroke="#4a7ccd" stroke-width="1.25"/><path d="M1.5 6.5L8.5 9.5L14.5 1.5" fill="none" stroke="#ea3944" stroke-width="1.3"/><path d="M1 10h1v1h-1zM0 11h1v1h-1zM2 11h1v1h-1zM1 12h1v1h-1z" fill="#4a7ccd"/><path d="M0 10h1v1h-1zM2 10h1v1h-1zM0 12h1v1h-1zM2 12h1v1h-1z" fill="#4a7ccd" opacity="0.75"/><path d="M1 11h1v1h-1z" fill="#fff" opacity="0.65"/><path d="M8 4h1v1h-1zM7 5h1v1h-1zM9 5h1v1h-1zM8 6h1v1h-1z" fill="#4a7ccd"/><path d="M7 4h1v1h-1zM9 4h1v1h-1zM7 6h1v1h-1zM9 6h1v1h-1z" fill="#4a7ccd" opacity="0.75"/><path d="M8 5h1v1h-1z" fill="#fff" opacity="0.65"/><path d="M14 5h1v1h-1zM13 6h1v1h-1zM15 6h1v1h-1zM14 7h1v1h-1z" fill="#4a7ccd"/><path d="M13 5h1v1h-1zM15 5h1v1h-1zM13 7h1v1h-1zM15 7h1v1h-1z" fill="#4a7ccd" opacity="0.75"/><path d="M14 6h1v1h-1z" fill="#fff" opacity="0.65"/><path d="M1 5h1v1h-1zM0 6h1v1h-1zM2 6h1v1h-1zM1 7h1v1h-1z" fill="#ea3944"/><path d="M0 5h1v1h-1zM2 5h1v1h-1zM0 7h1v1h-1zM2 7h1v1h-1z" fill="#ea3944" opacity="0.75"/><path d="M1 6h1v1h-1z" fill="#fff" opacity="0.65"/><path d="M8 8h1v1h-1zM7 9h1v1h-1zM9 9h1v1h-1zM8 10h1v1h-1z" fill="#ea3944"/><path d="M7 8h1v1h-1zM9 8h1v1h-1zM7 10h1v1h-1zM9 10h1v1h-1z" fill="#ea3944" opacity="0.75"/><path d="M8 9h1v1h-1z" fill="#fff" opacity="0.65"/><path d="M14 0h1v1h-1zM13 1h1v1h-1zM15 1h1v1h-1zM14 2h1v1h-1z" fill="#ea3944"/><path d="M13 0h1v1h-1zM15 0h1v1h-1zM13 2h1v1h-1zM15 2h1v1h-1z" fill="#ea3944" opacity="0.75"/><path d="M14 1h1v1h-1z" fill="#fff" opacity="0.65"/></svg>
<div class="t tr" style="left:86px;top:252px">Klimaanlage (simpel), Chile, Santiago de Chile</div>
<svg class="a" style="left:65px;top:270px" width="16" height="14" viewBox="0 0 16 14"><path d="M1.5 11.5L8.5 5.5L14.5 6.5" fill="none" stroke="#4a7ccd" stroke-width="1.25"/><path d="M1.5 6.5L8.5 9.5L14.5 1.5" fill="none" stroke="#ea3944" stroke-width="1.3"/><path d="M1 10h1v1h-1zM0 11h1v1h-1zM2 11h1v1h-1zM1 12h1v1h-1z" fill="#4a7ccd"/><path d="M0 10h1v1h-1zM2 10h1v1h-1zM0 12h1v1h-1zM2 12h1v1h-1z" fill="#4a7ccd" opacity="0.75"/><path d="M1 11h1v1h-1z" fill="#fff" opacity="0.65"/><path d="M8 4h1v1h-1zM7 5h1v1h-1zM9 5h1v1h-1zM8 6h1v1h-1z" fill="#4a7ccd"/><path d="M7 4h1v1h-1zM9 4h1v1h-1zM7 6h1v1h-1zM9 6h1v1h-1z" fill="#4a7ccd" opacity="0.75"/><path d="M8 5h1v1h-1z" fill="#fff" opacity="0.65"/><path d="M14 5h1v1h-1zM13 6h1v1h-1zM15 6h1v1h-1zM14 7h1v1h-1z" fill="#4a7ccd"/><path d="M13 5h1v1h-1zM15 5h1v1h-1zM13 7h1v1h-1zM15 7h1v1h-1z" fill="#4a7ccd" opacity="0.75"/><path d="M14 6h1v1h-1z" fill="#fff" opacity="0.65"/><path d="M1 5h1v1h-1zM0 6h1v1h-1zM2 6h1v1h-1zM1 7h1v1h-1z" fill="#ea3944"/><path d="M0 5h1v1h-1zM2 5h1v1h-1zM0 7h1v1h-1zM2 7h1v1h-1z" fill="#ea3944" opacity="0.75"/><path d="M1 6h1v1h-1z" fill="#fff" opacity="0.65"/><path d="M8 8h1v1h-1zM7 9h1v1h-1zM9 9h1v1h-1zM8 10h1v1h-1z" fill="#ea3944"/><path d="M7 8h1v1h-1zM9 8h1v1h-1zM7 10h1v1h-1zM9 10h1v1h-1z" fill="#ea3944" opacity="0.75"/><path d="M8 9h1v1h-1z" fill="#fff" opacity="0.65"/><path d="M14 0h1v1h-1zM13 1h1v1h-1zM15 1h1v1h-1zM14 2h1v1h-1z" fill="#ea3944"/><path d="M13 0h1v1h-1zM15 0h1v1h-1zM13 2h1v1h-1zM15 2h1v1h-1z" fill="#ea3944" opacity="0.75"/><path d="M14 1h1v1h-1z" fill="#fff" opacity="0.65"/></svg>
<div class="t tr" style="left:86px;top:272px">Klimaanlage (simpel), Dänemark, København</div>
<svg class="a" style="left:65px;top:290px" width="16" height="14" viewBox="0 0 16 14"><path d="M1.5 11.5L8.5 5.5L14.5 6.5" fill="none" stroke="#4a7ccd" stroke-width="1.25"/><path d="M1.5 6.5L8.5 9.5L14.5 1.5" fill="none" stroke="#ea3944" stroke-width="1.3"/><path d="M1 10h1v1h-1zM0 11h1v1h-1zM2 11h1v1h-1zM1 12h1v1h-1z" fill="#4a7ccd"/><path d="M0 10h1v1h-1zM2 10h1v1h-1zM0 12h1v1h-1zM2 12h1v1h-1z" fill="#4a7ccd" opacity="0.75"/><path d="M1 11h1v1h-1z" fill="#fff" opacity="0.65"/><path d="M8 4h1v1h-1zM7 5h1v1h-1zM9 5h1v1h-1zM8 6h1v1h-1z" fill="#4a7ccd"/><path d="M7 4h1v1h-1zM9 4h1v1h-1zM7 6h1v1h-1zM9 6h1v1h-1z" fill="#4a7ccd" opacity="0.75"/><path d="M8 5h1v1h-1z" fill="#fff" opacity="0.65"/><path d="M14 5h1v1h-1zM13 6h1v1h-1zM15 6h1v1h-1zM14 7h1v1h-1z" fill="#4a7ccd"/><path d="M13 5h1v1h-1zM15 5h1v1h-1zM13 7h1v1h-1zM15 7h1v1h-1z" fill="#4a7ccd" opacity="0.75"/><path d="M14 6h1v1h-1z" fill="#fff" opacity="0.65"/><path d="M1 5h1v1h-1zM0 6h1v1h-1zM2 6h1v1h-1zM1 7h1v1h-1z" fill="#ea3944"/><path d="M0 5h1v1h-1zM2 5h1v1h-1zM0 7h1v1h-1zM2 7h1v1h-1z" fill="#ea3944" opacity="0.75"/><path d="M1 6h1v1h-1z" fill="#fff" opacity="0.65"/><path d="M8 8h1v1h-1zM7 9h1v1h-1zM9 9h1v1h-1zM8 10h1v1h-1z" fill="#ea3944"/><path d="M7 8h1v1h-1zM9 8h1v1h-1zM7 10h1v1h-1zM9 10h1v1h-1z" fill="#ea3944" opacity="0.75"/><path d="M8 9h1v1h-1z" fill="#fff" opacity="0.65"/><path d="M14 0h1v1h-1zM13 1h1v1h-1zM15 1h1v1h-1zM14 2h1v1h-1z" fill="#ea3944"/><path d="M13 0h1v1h-1zM15 0h1v1h-1zM13 2h1v1h-1zM15 2h1v1h-1z" fill="#ea3944" opacity="0.75"/><path d="M14 1h1v1h-1z" fill="#fff" opacity="0.65"/></svg>
<div class="t tr" style="left:86px;top:292px">Klimaanlage (simpel), Deutschland, Klimazone 01</div>
<svg class="a" style="left:65px;top:310px" width="16" height="14" viewBox="0 0 16 14"><path d="M1.5 11.5L8.5 5.5L14.5 6.5" fill="none" stroke="#4a7ccd" stroke-width="1.25"/><path d="M1.5 6.5L8.5 9.5L14.5 1.5" fill="none" stroke="#ea3944" stroke-width="1.3"/><path d="M1 10h1v1h-1zM0 11h1v1h-1zM2 11h1v1h-1zM1 12h1v1h-1z" fill="#4a7ccd"/><path d="M0 10h1v1h-1zM2 10h1v1h-1zM0 12h1v1h-1zM2 12h1v1h-1z" fill="#4a7ccd" opacity="0.75"/><path d="M1 11h1v1h-1z" fill="#fff" opacity="0.65"/><path d="M8 4h1v1h-1zM7 5h1v1h-1zM9 5h1v1h-1zM8 6h1v1h-1z" fill="#4a7ccd"/><path d="M7 4h1v1h-1zM9 4h1v1h-1zM7 6h1v1h-1zM9 6h1v1h-1z" fill="#4a7ccd" opacity="0.75"/><path d="M8 5h1v1h-1z" fill="#fff" opacity="0.65"/><path d="M14 5h1v1h-1zM13 6h1v1h-1zM15 6h1v1h-1zM14 7h1v1h-1z" fill="#4a7ccd"/><path d="M13 5h1v1h-1zM15 5h1v1h-1zM13 7h1v1h-1zM15 7h1v1h-1z" fill="#4a7ccd" opacity="0.75"/><path d="M14 6h1v1h-1z" fill="#fff" opacity="0.65"/><path d="M1 5h1v1h-1zM0 6h1v1h-1zM2 6h1v1h-1zM1 7h1v1h-1z" fill="#ea3944"/><path d="M0 5h1v1h-1zM2 5h1v1h-1zM0 7h1v1h-1zM2 7h1v1h-1z" fill="#ea3944" opacity="0.75"/><path d="M1 6h1v1h-1z" fill="#fff" opacity="0.65"/><path d="M8 8h1v1h-1zM7 9h1v1h-1zM9 9h1v1h-1zM8 10h1v1h-1z" fill="#ea3944"/><path d="M7 8h1v1h-1zM9 8h1v1h-1zM7 10h1v1h-1zM9 10h1v1h-1z" fill="#ea3944" opacity="0.75"/><path d="M8 9h1v1h-1z" fill="#fff" opacity="0.65"/><path d="M14 0h1v1h-1zM13 1h1v1h-1zM15 1h1v1h-1zM14 2h1v1h-1z" fill="#ea3944"/><path d="M13 0h1v1h-1zM15 0h1v1h-1zM13 2h1v1h-1zM15 2h1v1h-1z" fill="#ea3944" opacity="0.75"/><path d="M14 1h1v1h-1z" fill="#fff" opacity="0.65"/></svg>
<div class="t tr" style="left:86px;top:312px">Klimaanlage (simpel), Deutschland, Klimazone 02</div>
<svg class="a" style="left:65px;top:330px" width="16" height="14" viewBox="0 0 16 14"><path d="M1.5 11.5L8.5 5.5L14.5 6.5" fill="none" stroke="#4a7ccd" stroke-width="1.25"/><path d="M1.5 6.5L8.5 9.5L14.5 1.5" fill="none" stroke="#ea3944" stroke-width="1.3"/><path d="M1 10h1v1h-1zM0 11h1v1h-1zM2 11h1v1h-1zM1 12h1v1h-1z" fill="#4a7ccd"/><path d="M0 10h1v1h-1zM2 10h1v1h-1zM0 12h1v1h-1zM2 12h1v1h-1z" fill="#4a7ccd" opacity="0.75"/><path d="M1 11h1v1h-1z" fill="#fff" opacity="0.65"/><path d="M8 4h1v1h-1zM7 5h1v1h-1zM9 5h1v1h-1zM8 6h1v1h-1z" fill="#4a7ccd"/><path d="M7 4h1v1h-1zM9 4h1v1h-1zM7 6h1v1h-1zM9 6h1v1h-1z" fill="#4a7ccd" opacity="0.75"/><path d="M8 5h1v1h-1z" fill="#fff" opacity="0.65"/><path d="M14 5h1v1h-1zM13 6h1v1h-1zM15 6h1v1h-1zM14 7h1v1h-1z" fill="#4a7ccd"/><path d="M13 5h1v1h-1zM15 5h1v1h-1zM13 7h1v1h-1zM15 7h1v1h-1z" fill="#4a7ccd" opacity="0.75"/><path d="M14 6h1v1h-1z" fill="#fff" opacity="0.65"/><path d="M1 5h1v1h-1zM0 6h1v1h-1zM2 6h1v1h-1zM1 7h1v1h-1z" fill="#ea3944"/><path d="M0 5h1v1h-1zM2 5h1v1h-1zM0 7h1v1h-1zM2 7h1v1h-1z" fill="#ea3944" opacity="0.75"/><path d="M1 6h1v1h-1z" fill="#fff" opacity="0.65"/><path d="M8 8h1v1h-1zM7 9h1v1h-1zM9 9h1v1h-1zM8 10h1v1h-1z" fill="#ea3944"/><path d="M7 8h1v1h-1zM9 8h1v1h-1zM7 10h1v1h-1zM9 10h1v1h-1z" fill="#ea3944" opacity="0.75"/><path d="M8 9h1v1h-1z" fill="#fff" opacity="0.65"/><path d="M14 0h1v1h-1zM13 1h1v1h-1zM15 1h1v1h-1zM14 2h1v1h-1z" fill="#ea3944"/><path d="M13 0h1v1h-1zM15 0h1v1h-1zM13 2h1v1h-1zM15 2h1v1h-1z" fill="#ea3944" opacity="0.75"/><path d="M14 1h1v1h-1z" fill="#fff" opacity="0.65"/></svg>
<div class="t tr" style="left:86px;top:332px">Klimaanlage (simpel), Deutschland, Klimazone 03</div>
<svg class="a" style="left:65px;top:350px" width="16" height="14" viewBox="0 0 16 14"><path d="M1.5 11.5L8.5 5.5L14.5 6.5" fill="none" stroke="#4a7ccd" stroke-width="1.25"/><path d="M1.5 6.5L8.5 9.5L14.5 1.5" fill="none" stroke="#ea3944" stroke-width="1.3"/><path d="M1 10h1v1h-1zM0 11h1v1h-1zM2 11h1v1h-1zM1 12h1v1h-1z" fill="#4a7ccd"/><path d="M0 10h1v1h-1zM2 10h1v1h-1zM0 12h1v1h-1zM2 12h1v1h-1z" fill="#4a7ccd" opacity="0.75"/><path d="M1 11h1v1h-1z" fill="#fff" opacity="0.65"/><path d="M8 4h1v1h-1zM7 5h1v1h-1zM9 5h1v1h-1zM8 6h1v1h-1z" fill="#4a7ccd"/><path d="M7 4h1v1h-1zM9 4h1v1h-1zM7 6h1v1h-1zM9 6h1v1h-1z" fill="#4a7ccd" opacity="0.75"/><path d="M8 5h1v1h-1z" fill="#fff" opacity="0.65"/><path d="M14 5h1v1h-1zM13 6h1v1h-1zM15 6h1v1h-1zM14 7h1v1h-1z" fill="#4a7ccd"/><path d="M13 5h1v1h-1zM15 5h1v1h-1zM13 7h1v1h-1zM15 7h1v1h-1z" fill="#4a7ccd" opacity="0.75"/><path d="M14 6h1v1h-1z" fill="#fff" opacity="0.65"/><path d="M1 5h1v1h-1zM0 6h1v1h-1zM2 6h1v1h-1zM1 7h1v1h-1z" fill="#ea3944"/><path d="M0 5h1v1h-1zM2 5h1v1h-1zM0 7h1v1h-1zM2 7h1v1h-1z" fill="#ea3944" opacity="0.75"/><path d="M1 6h1v1h-1z" fill="#fff" opacity="0.65"/><path d="M8 8h1v1h-1zM7 9h1v1h-1zM9 9h1v1h-1zM8 10h1v1h-1z" fill="#ea3944"/><path d="M7 8h1v1h-1zM9 8h1v1h-1zM7 10h1v1h-1zM9 10h1v1h-1z" fill="#ea3944" opacity="0.75"/><path d="M8 9h1v1h-1z" fill="#fff" opacity="0.65"/><path d="M14 0h1v1h-1zM13 1h1v1h-1zM15 1h1v1h-1zM14 2h1v1h-1z" fill="#ea3944"/><path d="M13 0h1v1h-1zM15 0h1v1h-1zM13 2h1v1h-1zM15 2h1v1h-1z" fill="#ea3944" opacity="0.75"/><path d="M14 1h1v1h-1z" fill="#fff" opacity="0.65"/></svg>
<div class="t tr" style="left:86px;top:352px">Klimaanlage (simpel), Deutschland, Klimazone 04</div>
<svg class="a" style="left:65px;top:370px" width="16" height="14" viewBox="0 0 16 14"><path d="M1.5 11.5L8.5 5.5L14.5 6.5" fill="none" stroke="#4a7ccd" stroke-width="1.25"/><path d="M1.5 6.5L8.5 9.5L14.5 1.5" fill="none" stroke="#ea3944" stroke-width="1.3"/><path d="M1 10h1v1h-1zM0 11h1v1h-1zM2 11h1v1h-1zM1 12h1v1h-1z" fill="#4a7ccd"/><path d="M0 10h1v1h-1zM2 10h1v1h-1zM0 12h1v1h-1zM2 12h1v1h-1z" fill="#4a7ccd" opacity="0.75"/><path d="M1 11h1v1h-1z" fill="#fff" opacity="0.65"/><path d="M8 4h1v1h-1zM7 5h1v1h-1zM9 5h1v1h-1zM8 6h1v1h-1z" fill="#4a7ccd"/><path d="M7 4h1v1h-1zM9 4h1v1h-1zM7 6h1v1h-1zM9 6h1v1h-1z" fill="#4a7ccd" opacity="0.75"/><path d="M8 5h1v1h-1z" fill="#fff" opacity="0.65"/><path d="M14 5h1v1h-1zM13 6h1v1h-1zM15 6h1v1h-1zM14 7h1v1h-1z" fill="#4a7ccd"/><path d="M13 5h1v1h-1zM15 5h1v1h-1zM13 7h1v1h-1zM15 7h1v1h-1z" fill="#4a7ccd" opacity="0.75"/><path d="M14 6h1v1h-1z" fill="#fff" opacity="0.65"/><path d="M1 5h1v1h-1zM0 6h1v1h-1zM2 6h1v1h-1zM1 7h1v1h-1z" fill="#ea3944"/><path d="M0 5h1v1h-1zM2 5h1v1h-1zM0 7h1v1h-1zM2 7h1v1h-1z" fill="#ea3944" opacity="0.75"/><path d="M1 6h1v1h-1z" fill="#fff" opacity="0.65"/><path d="M8 8h1v1h-1zM7 9h1v1h-1zM9 9h1v1h-1zM8 10h1v1h-1z" fill="#ea3944"/><path d="M7 8h1v1h-1zM9 8h1v1h-1zM7 10h1v1h-1zM9 10h1v1h-1z" fill="#ea3944" opacity="0.75"/><path d="M8 9h1v1h-1z" fill="#fff" opacity="0.65"/><path d="M14 0h1v1h-1zM13 1h1v1h-1zM15 1h1v1h-1zM14 2h1v1h-1z" fill="#ea3944"/><path d="M13 0h1v1h-1zM15 0h1v1h-1zM13 2h1v1h-1zM15 2h1v1h-1z" fill="#ea3944" opacity="0.75"/><path d="M14 1h1v1h-1z" fill="#fff" opacity="0.65"/></svg>
<div class="t tr" style="left:86px;top:372px">Klimaanlage (simpel), Deutschland, Klimazone 05</div>
<svg class="a" style="left:65px;top:390px" width="16" height="14" viewBox="0 0 16 14"><path d="M1.5 11.5L8.5 5.5L14.5 6.5" fill="none" stroke="#4a7ccd" stroke-width="1.25"/><path d="M1.5 6.5L8.5 9.5L14.5 1.5" fill="none" stroke="#ea3944" stroke-width="1.3"/><path d="M1 10h1v1h-1zM0 11h1v1h-1zM2 11h1v1h-1zM1 12h1v1h-1z" fill="#4a7ccd"/><path d="M0 10h1v1h-1zM2 10h1v1h-1zM0 12h1v1h-1zM2 12h1v1h-1z" fill="#4a7ccd" opacity="0.75"/><path d="M1 11h1v1h-1z" fill="#fff" opacity="0.65"/><path d="M8 4h1v1h-1zM7 5h1v1h-1zM9 5h1v1h-1zM8 6h1v1h-1z" fill="#4a7ccd"/><path d="M7 4h1v1h-1zM9 4h1v1h-1zM7 6h1v1h-1zM9 6h1v1h-1z" fill="#4a7ccd" opacity="0.75"/><path d="M8 5h1v1h-1z" fill="#fff" opacity="0.65"/><path d="M14 5h1v1h-1zM13 6h1v1h-1zM15 6h1v1h-1zM14 7h1v1h-1z" fill="#4a7ccd"/><path d="M13 5h1v1h-1zM15 5h1v1h-1zM13 7h1v1h-1zM15 7h1v1h-1z" fill="#4a7ccd" opacity="0.75"/><path d="M14 6h1v1h-1z" fill="#fff" opacity="0.65"/><path d="M1 5h1v1h-1zM0 6h1v1h-1zM2 6h1v1h-1zM1 7h1v1h-1z" fill="#ea3944"/><path d="M0 5h1v1h-1zM2 5h1v1h-1zM0 7h1v1h-1zM2 7h1v1h-1z" fill="#ea3944" opacity="0.75"/><path d="M1 6h1v1h-1z" fill="#fff" opacity="0.65"/><path d="M8 8h1v1h-1zM7 9h1v1h-1zM9 9h1v1h-1zM8 10h1v1h-1z" fill="#ea3944"/><path d="M7 8h1v1h-1zM9 8h1v1h-1zM7 10h1v1h-1zM9 10h1v1h-1z" fill="#ea3944" opacity="0.75"/><path d="M8 9h1v1h-1z" fill="#fff" opacity="0.65"/><path d="M14 0h1v1h-1zM13 1h1v1h-1zM15 1h1v1h-1zM14 2h1v1h-1z" fill="#ea3944"/><path d="M13 0h1v1h-1zM15 0h1v1h-1zM13 2h1v1h-1zM15 2h1v1h-1z" fill="#ea3944" opacity="0.75"/><path d="M14 1h1v1h-1z" fill="#fff" opacity="0.65"/></svg>
<div class="t tr" style="left:86px;top:392px">Klimaanlage (simpel), Deutschland, Klimazone 06</div>
<svg class="a" style="left:65px;top:410px" width="16" height="14" viewBox="0 0 16 14"><path d="M1.5 11.5L8.5 5.5L14.5 6.5" fill="none" stroke="#4a7ccd" stroke-width="1.25"/><path d="M1.5 6.5L8.5 9.5L14.5 1.5" fill="none" stroke="#ea3944" stroke-width="1.3"/><path d="M1 10h1v1h-1zM0 11h1v1h-1zM2 11h1v1h-1zM1 12h1v1h-1z" fill="#4a7ccd"/><path d="M0 10h1v1h-1zM2 10h1v1h-1zM0 12h1v1h-1zM2 12h1v1h-1z" fill="#4a7ccd" opacity="0.75"/><path d="M1 11h1v1h-1z" fill="#fff" opacity="0.65"/><path d="M8 4h1v1h-1zM7 5h1v1h-1zM9 5h1v1h-1zM8 6h1v1h-1z" fill="#4a7ccd"/><path d="M7 4h1v1h-1zM9 4h1v1h-1zM7 6h1v1h-1zM9 6h1v1h-1z" fill="#4a7ccd" opacity="0.75"/><path d="M8 5h1v1h-1z" fill="#fff" opacity="0.65"/><path d="M14 5h1v1h-1zM13 6h1v1h-1zM15 6h1v1h-1zM14 7h1v1h-1z" fill="#4a7ccd"/><path d="M13 5h1v1h-1zM15 5h1v1h-1zM13 7h1v1h-1zM15 7h1v1h-1z" fill="#4a7ccd" opacity="0.75"/><path d="M14 6h1v1h-1z" fill="#fff" opacity="0.65"/><path d="M1 5h1v1h-1zM0 6h1v1h-1zM2 6h1v1h-1zM1 7h1v1h-1z" fill="#ea3944"/><path d="M0 5h1v1h-1zM2 5h1v1h-1zM0 7h1v1h-1zM2 7h1v1h-1z" fill="#ea3944" opacity="0.75"/><path d="M1 6h1v1h-1z" fill="#fff" opacity="0.65"/><path d="M8 8h1v1h-1zM7 9h1v1h-1zM9 9h1v1h-1zM8 10h1v1h-1z" fill="#ea3944"/><path d="M7 8h1v1h-1zM9 8h1v1h-1zM7 10h1v1h-1zM9 10h1v1h-1z" fill="#ea3944" opacity="0.75"/><path d="M8 9h1v1h-1z" fill="#fff" opacity="0.65"/><path d="M14 0h1v1h-1zM13 1h1v1h-1zM15 1h1v1h-1zM14 2h1v1h-1z" fill="#ea3944"/><path d="M13 0h1v1h-1zM15 0h1v1h-1zM13 2h1v1h-1zM15 2h1v1h-1z" fill="#ea3944" opacity="0.75"/><path d="M14 1h1v1h-1z" fill="#fff" opacity="0.65"/></svg>
<div class="t tr" style="left:86px;top:412px">Klimaanlage (simpel), Deutschland, Klimazone 07</div>
<svg class="a" style="left:65px;top:430px" width="16" height="14" viewBox="0 0 16 14"><path d="M1.5 11.5L8.5 5.5L14.5 6.5" fill="none" stroke="#4a7ccd" stroke-width="1.25"/><path d="M1.5 6.5L8.5 9.5L14.5 1.5" fill="none" stroke="#ea3944" stroke-width="1.3"/><path d="M1 10h1v1h-1zM0 11h1v1h-1zM2 11h1v1h-1zM1 12h1v1h-1z" fill="#4a7ccd"/><path d="M0 10h1v1h-1zM2 10h1v1h-1zM0 12h1v1h-1zM2 12h1v1h-1z" fill="#4a7ccd" opacity="0.75"/><path d="M1 11h1v1h-1z" fill="#fff" opacity="0.65"/><path d="M8 4h1v1h-1zM7 5h1v1h-1zM9 5h1v1h-1zM8 6h1v1h-1z" fill="#4a7ccd"/><path d="M7 4h1v1h-1zM9 4h1v1h-1zM7 6h1v1h-1zM9 6h1v1h-1z" fill="#4a7ccd" opacity="0.75"/><path d="M8 5h1v1h-1z" fill="#fff" opacity="0.65"/><path d="M14 5h1v1h-1zM13 6h1v1h-1zM15 6h1v1h-1zM14 7h1v1h-1z" fill="#4a7ccd"/><path d="M13 5h1v1h-1zM15 5h1v1h-1zM13 7h1v1h-1zM15 7h1v1h-1z" fill="#4a7ccd" opacity="0.75"/><path d="M14 6h1v1h-1z" fill="#fff" opacity="0.65"/><path d="M1 5h1v1h-1zM0 6h1v1h-1zM2 6h1v1h-1zM1 7h1v1h-1z" fill="#ea3944"/><path d="M0 5h1v1h-1zM2 5h1v1h-1zM0 7h1v1h-1zM2 7h1v1h-1z" fill="#ea3944" opacity="0.75"/><path d="M1 6h1v1h-1z" fill="#fff" opacity="0.65"/><path d="M8 8h1v1h-1zM7 9h1v1h-1zM9 9h1v1h-1zM8 10h1v1h-1z" fill="#ea3944"/><path d="M7 8h1v1h-1zM9 8h1v1h-1zM7 10h1v1h-1zM9 10h1v1h-1z" fill="#ea3944" opacity="0.75"/><path d="M8 9h1v1h-1z" fill="#fff" opacity="0.65"/><path d="M14 0h1v1h-1zM13 1h1v1h-1zM15 1h1v1h-1zM14 2h1v1h-1z" fill="#ea3944"/><path d="M13 0h1v1h-1zM15 0h1v1h-1zM13 2h1v1h-1zM15 2h1v1h-1z" fill="#ea3944" opacity="0.75"/><path d="M14 1h1v1h-1z" fill="#fff" opacity="0.65"/></svg>
<div class="t tr" style="left:86px;top:432px">Klimaanlage (simpel), Deutschland, Klimazone 08</div>
<svg class="a" style="left:65px;top:450px" width="16" height="14" viewBox="0 0 16 14"><path d="M1.5 11.5L8.5 5.5L14.5 6.5" fill="none" stroke="#4a7ccd" stroke-width="1.25"/><path d="M1.5 6.5L8.5 9.5L14.5 1.5" fill="none" stroke="#ea3944" stroke-width="1.3"/><path d="M1 10h1v1h-1zM0 11h1v1h-1zM2 11h1v1h-1zM1 12h1v1h-1z" fill="#4a7ccd"/><path d="M0 10h1v1h-1zM2 10h1v1h-1zM0 12h1v1h-1zM2 12h1v1h-1z" fill="#4a7ccd" opacity="0.75"/><path d="M1 11h1v1h-1z" fill="#fff" opacity="0.65"/><path d="M8 4h1v1h-1zM7 5h1v1h-1zM9 5h1v1h-1zM8 6h1v1h-1z" fill="#4a7ccd"/><path d="M7 4h1v1h-1zM9 4h1v1h-1zM7 6h1v1h-1zM9 6h1v1h-1z" fill="#4a7ccd" opacity="0.75"/><path d="M8 5h1v1h-1z" fill="#fff" opacity="0.65"/><path d="M14 5h1v1h-1zM13 6h1v1h-1zM15 6h1v1h-1zM14 7h1v1h-1z" fill="#4a7ccd"/><path d="M13 5h1v1h-1zM15 5h1v1h-1zM13 7h1v1h-1zM15 7h1v1h-1z" fill="#4a7ccd" opacity="0.75"/><path d="M14 6h1v1h-1z" fill="#fff" opacity="0.65"/><path d="M1 5h1v1h-1zM0 6h1v1h-1zM2 6h1v1h-1zM1 7h1v1h-1z" fill="#ea3944"/><path d="M0 5h1v1h-1zM2 5h1v1h-1zM0 7h1v1h-1zM2 7h1v1h-1z" fill="#ea3944" opacity="0.75"/><path d="M1 6h1v1h-1z" fill="#fff" opacity="0.65"/><path d="M8 8h1v1h-1zM7 9h1v1h-1zM9 9h1v1h-1zM8 10h1v1h-1z" fill="#ea3944"/><path d="M7 8h1v1h-1zM9 8h1v1h-1zM7 10h1v1h-1zM9 10h1v1h-1z" fill="#ea3944" opacity="0.75"/><path d="M8 9h1v1h-1z" fill="#fff" opacity="0.65"/><path d="M14 0h1v1h-1zM13 1h1v1h-1zM15 1h1v1h-1zM14 2h1v1h-1z" fill="#ea3944"/><path d="M13 0h1v1h-1zM15 0h1v1h-1zM13 2h1v1h-1zM15 2h1v1h-1z" fill="#ea3944" opacity="0.75"/><path d="M14 1h1v1h-1z" fill="#fff" opacity="0.65"/></svg>
<div class="t tr" style="left:86px;top:452px">Klimaanlage (simpel), Deutschland, Klimazone 09</div>
<svg class="a" style="left:65px;top:470px" width="16" height="14" viewBox="0 0 16 14"><path d="M1.5 11.5L8.5 5.5L14.5 6.5" fill="none" stroke="#4a7ccd" stroke-width="1.25"/><path d="M1.5 6.5L8.5 9.5L14.5 1.5" fill="none" stroke="#ea3944" stroke-width="1.3"/><path d="M1 10h1v1h-1zM0 11h1v1h-1zM2 11h1v1h-1zM1 12h1v1h-1z" fill="#4a7ccd"/><path d="M0 10h1v1h-1zM2 10h1v1h-1zM0 12h1v1h-1zM2 12h1v1h-1z" fill="#4a7ccd" opacity="0.75"/><path d="M1 11h1v1h-1z" fill="#fff" opacity="0.65"/><path d="M8 4h1v1h-1zM7 5h1v1h-1zM9 5h1v1h-1zM8 6h1v1h-1z" fill="#4a7ccd"/><path d="M7 4h1v1h-1zM9 4h1v1h-1zM7 6h1v1h-1zM9 6h1v1h-1z" fill="#4a7ccd" opacity="0.75"/><path d="M8 5h1v1h-1z" fill="#fff" opacity="0.65"/><path d="M14 5h1v1h-1zM13 6h1v1h-1zM15 6h1v1h-1zM14 7h1v1h-1z" fill="#4a7ccd"/><path d="M13 5h1v1h-1zM15 5h1v1h-1zM13 7h1v1h-1zM15 7h1v1h-1z" fill="#4a7ccd" opacity="0.75"/><path d="M14 6h1v1h-1z" fill="#fff" opacity="0.65"/><path d="M1 5h1v1h-1zM0 6h1v1h-1zM2 6h1v1h-1zM1 7h1v1h-1z" fill="#ea3944"/><path d="M0 5h1v1h-1zM2 5h1v1h-1zM0 7h1v1h-1zM2 7h1v1h-1z" fill="#ea3944" opacity="0.75"/><path d="M1 6h1v1h-1z" fill="#fff" opacity="0.65"/><path d="M8 8h1v1h-1zM7 9h1v1h-1zM9 9h1v1h-1zM8 10h1v1h-1z" fill="#ea3944"/><path d="M7 8h1v1h-1zM9 8h1v1h-1zM7 10h1v1h-1zM9 10h1v1h-1z" fill="#ea3944" opacity="0.75"/><path d="M8 9h1v1h-1z" fill="#fff" opacity="0.65"/><path d="M14 0h1v1h-1zM13 1h1v1h-1zM15 1h1v1h-1zM14 2h1v1h-1z" fill="#ea3944"/><path d="M13 0h1v1h-1zM15 0h1v1h-1zM13 2h1v1h-1zM15 2h1v1h-1z" fill="#ea3944" opacity="0.75"/><path d="M14 1h1v1h-1z" fill="#fff" opacity="0.65"/></svg>
<div class="t tr" style="left:86px;top:472px">Klimaanlage (simpel), Deutschland, Klimazone 10</div>
<svg class="a" style="left:65px;top:490px" width="16" height="14" viewBox="0 0 16 14"><path d="M1.5 11.5L8.5 5.5L14.5 6.5" fill="none" stroke="#4a7ccd" stroke-width="1.25"/><path d="M1.5 6.5L8.5 9.5L14.5 1.5" fill="none" stroke="#ea3944" stroke-width="1.3"/><path d="M1 10h1v1h-1zM0 11h1v1h-1zM2 11h1v1h-1zM1 12h1v1h-1z" fill="#4a7ccd"/><path d="M0 10h1v1h-1zM2 10h1v1h-1zM0 12h1v1h-1zM2 12h1v1h-1z" fill="#4a7ccd" opacity="0.75"/><path d="M1 11h1v1h-1z" fill="#fff" opacity="0.65"/><path d="M8 4h1v1h-1zM7 5h1v1h-1zM9 5h1v1h-1zM8 6h1v1h-1z" fill="#4a7ccd"/><path d="M7 4h1v1h-1zM9 4h1v1h-1zM7 6h1v1h-1zM9 6h1v1h-1z" fill="#4a7ccd" opacity="0.75"/><path d="M8 5h1v1h-1z" fill="#fff" opacity="0.65"/><path d="M14 5h1v1h-1zM13 6h1v1h-1zM15 6h1v1h-1zM14 7h1v1h-1z" fill="#4a7ccd"/><path d="M13 5h1v1h-1zM15 5h1v1h-1zM13 7h1v1h-1zM15 7h1v1h-1z" fill="#4a7ccd" opacity="0.75"/><path d="M14 6h1v1h-1z" fill="#fff" opacity="0.65"/><path d="M1 5h1v1h-1zM0 6h1v1h-1zM2 6h1v1h-1zM1 7h1v1h-1z" fill="#ea3944"/><path d="M0 5h1v1h-1zM2 5h1v1h-1zM0 7h1v1h-1zM2 7h1v1h-1z" fill="#ea3944" opacity="0.75"/><path d="M1 6h1v1h-1z" fill="#fff" opacity="0.65"/><path d="M8 8h1v1h-1zM7 9h1v1h-1zM9 9h1v1h-1zM8 10h1v1h-1z" fill="#ea3944"/><path d="M7 8h1v1h-1zM9 8h1v1h-1zM7 10h1v1h-1zM9 10h1v1h-1z" fill="#ea3944" opacity="0.75"/><path d="M8 9h1v1h-1z" fill="#fff" opacity="0.65"/><path d="M14 0h1v1h-1zM13 1h1v1h-1zM15 1h1v1h-1zM14 2h1v1h-1z" fill="#ea3944"/><path d="M13 0h1v1h-1zM15 0h1v1h-1zM13 2h1v1h-1zM15 2h1v1h-1z" fill="#ea3944" opacity="0.75"/><path d="M14 1h1v1h-1z" fill="#fff" opacity="0.65"/></svg>
<div class="t tr" style="left:86px;top:492px">Klimaanlage (simpel), Deutschland, Klimazone 11</div>
<svg class="a" style="left:65px;top:510px" width="16" height="14" viewBox="0 0 16 14"><path d="M1.5 11.5L8.5 5.5L14.5 6.5" fill="none" stroke="#4a7ccd" stroke-width="1.25"/><path d="M1.5 6.5L8.5 9.5L14.5 1.5" fill="none" stroke="#ea3944" stroke-width="1.3"/><path d="M1 10h1v1h-1zM0 11h1v1h-1zM2 11h1v1h-1zM1 12h1v1h-1z" fill="#4a7ccd"/><path d="M0 10h1v1h-1zM2 10h1v1h-1zM0 12h1v1h-1zM2 12h1v1h-1z" fill="#4a7ccd" opacity="0.75"/><path d="M1 11h1v1h-1z" fill="#fff" opacity="0.65"/><path d="M8 4h1v1h-1zM7 5h1v1h-1zM9 5h1v1h-1zM8 6h1v1h-1z" fill="#4a7ccd"/><path d="M7 4h1v1h-1zM9 4h1v1h-1zM7 6h1v1h-1zM9 6h1v1h-1z" fill="#4a7ccd" opacity="0.75"/><path d="M8 5h1v1h-1z" fill="#fff" opacity="0.65"/><path d="M14 5h1v1h-1zM13 6h1v1h-1zM15 6h1v1h-1zM14 7h1v1h-1z" fill="#4a7ccd"/><path d="M13 5h1v1h-1zM15 5h1v1h-1zM13 7h1v1h-1zM15 7h1v1h-1z" fill="#4a7ccd" opacity="0.75"/><path d="M14 6h1v1h-1z" fill="#fff" opacity="0.65"/><path d="M1 5h1v1h-1zM0 6h1v1h-1zM2 6h1v1h-1zM1 7h1v1h-1z" fill="#ea3944"/><path d="M0 5h1v1h-1zM2 5h1v1h-1zM0 7h1v1h-1zM2 7h1v1h-1z" fill="#ea3944" opacity="0.75"/><path d="M1 6h1v1h-1z" fill="#fff" opacity="0.65"/><path d="M8 8h1v1h-1zM7 9h1v1h-1zM9 9h1v1h-1zM8 10h1v1h-1z" fill="#ea3944"/><path d="M7 8h1v1h-1zM9 8h1v1h-1zM7 10h1v1h-1zM9 10h1v1h-1z" fill="#ea3944" opacity="0.75"/><path d="M8 9h1v1h-1z" fill="#fff" opacity="0.65"/><path d="M14 0h1v1h-1zM13 1h1v1h-1zM15 1h1v1h-1zM14 2h1v1h-1z" fill="#ea3944"/><path d="M13 0h1v1h-1zM15 0h1v1h-1zM13 2h1v1h-1zM15 2h1v1h-1z" fill="#ea3944" opacity="0.75"/><path d="M14 1h1v1h-1z" fill="#fff" opacity="0.65"/></svg>
<div class="t tr" style="left:86px;top:512px">Klimaanlage (simpel), Deutschland, Klimazone 12</div>
<svg class="a" style="left:65px;top:530px" width="16" height="14" viewBox="0 0 16 14"><path d="M1.5 11.5L8.5 5.5L14.5 6.5" fill="none" stroke="#4a7ccd" stroke-width="1.25"/><path d="M1.5 6.5L8.5 9.5L14.5 1.5" fill="none" stroke="#ea3944" stroke-width="1.3"/><path d="M1 10h1v1h-1zM0 11h1v1h-1zM2 11h1v1h-1zM1 12h1v1h-1z" fill="#4a7ccd"/><path d="M0 10h1v1h-1zM2 10h1v1h-1zM0 12h1v1h-1zM2 12h1v1h-1z" fill="#4a7ccd" opacity="0.75"/><path d="M1 11h1v1h-1z" fill="#fff" opacity="0.65"/><path d="M8 4h1v1h-1zM7 5h1v1h-1zM9 5h1v1h-1zM8 6h1v1h-1z" fill="#4a7ccd"/><path d="M7 4h1v1h-1zM9 4h1v1h-1zM7 6h1v1h-1zM9 6h1v1h-1z" fill="#4a7ccd" opacity="0.75"/><path d="M8 5h1v1h-1z" fill="#fff" opacity="0.65"/><path d="M14 5h1v1h-1zM13 6h1v1h-1zM15 6h1v1h-1zM14 7h1v1h-1z" fill="#4a7ccd"/><path d="M13 5h1v1h-1zM15 5h1v1h-1zM13 7h1v1h-1zM15 7h1v1h-1z" fill="#4a7ccd" opacity="0.75"/><path d="M14 6h1v1h-1z" fill="#fff" opacity="0.65"/><path d="M1 5h1v1h-1zM0 6h1v1h-1zM2 6h1v1h-1zM1 7h1v1h-1z" fill="#ea3944"/><path d="M0 5h1v1h-1zM2 5h1v1h-1zM0 7h1v1h-1zM2 7h1v1h-1z" fill="#ea3944" opacity="0.75"/><path d="M1 6h1v1h-1z" fill="#fff" opacity="0.65"/><path d="M8 8h1v1h-1zM7 9h1v1h-1zM9 9h1v1h-1zM8 10h1v1h-1z" fill="#ea3944"/><path d="M7 8h1v1h-1zM9 8h1v1h-1zM7 10h1v1h-1zM9 10h1v1h-1z" fill="#ea3944" opacity="0.75"/><path d="M8 9h1v1h-1z" fill="#fff" opacity="0.65"/><path d="M14 0h1v1h-1zM13 1h1v1h-1zM15 1h1v1h-1zM14 2h1v1h-1z" fill="#ea3944"/><path d="M13 0h1v1h-1zM15 0h1v1h-1zM13 2h1v1h-1zM15 2h1v1h-1z" fill="#ea3944" opacity="0.75"/><path d="M14 1h1v1h-1z" fill="#fff" opacity="0.65"/></svg>
<div class="t tr" style="left:86px;top:532px">Klimaanlage (simpel), Deutschland, Klimazone 13</div>
<svg class="a" style="left:65px;top:550px" width="16" height="14" viewBox="0 0 16 14"><path d="M1.5 11.5L8.5 5.5L14.5 6.5" fill="none" stroke="#4a7ccd" stroke-width="1.25"/><path d="M1.5 6.5L8.5 9.5L14.5 1.5" fill="none" stroke="#ea3944" stroke-width="1.3"/><path d="M1 10h1v1h-1zM0 11h1v1h-1zM2 11h1v1h-1zM1 12h1v1h-1z" fill="#4a7ccd"/><path d="M0 10h1v1h-1zM2 10h1v1h-1zM0 12h1v1h-1zM2 12h1v1h-1z" fill="#4a7ccd" opacity="0.75"/><path d="M1 11h1v1h-1z" fill="#fff" opacity="0.65"/><path d="M8 4h1v1h-1zM7 5h1v1h-1zM9 5h1v1h-1zM8 6h1v1h-1z" fill="#4a7ccd"/><path d="M7 4h1v1h-1zM9 4h1v1h-1zM7 6h1v1h-1zM9 6h1v1h-1z" fill="#4a7ccd" opacity="0.75"/><path d="M8 5h1v1h-1z" fill="#fff" opacity="0.65"/><path d="M14 5h1v1h-1zM13 6h1v1h-1zM15 6h1v1h-1zM14 7h1v1h-1z" fill="#4a7ccd"/><path d="M13 5h1v1h-1zM15 5h1v1h-1zM13 7h1v1h-1zM15 7h1v1h-1z" fill="#4a7ccd" opacity="0.75"/><path d="M14 6h1v1h-1z" fill="#fff" opacity="0.65"/><path d="M1 5h1v1h-1zM0 6h1v1h-1zM2 6h1v1h-1zM1 7h1v1h-1z" fill="#ea3944"/><path d="M0 5h1v1h-1zM2 5h1v1h-1zM0 7h1v1h-1zM2 7h1v1h-1z" fill="#ea3944" opacity="0.75"/><path d="M1 6h1v1h-1z" fill="#fff" opacity="0.65"/><path d="M8 8h1v1h-1zM7 9h1v1h-1zM9 9h1v1h-1zM8 10h1v1h-1z" fill="#ea3944"/><path d="M7 8h1v1h-1zM9 8h1v1h-1zM7 10h1v1h-1zM9 10h1v1h-1z" fill="#ea3944" opacity="0.75"/><path d="M8 9h1v1h-1z" fill="#fff" opacity="0.65"/><path d="M14 0h1v1h-1zM13 1h1v1h-1zM15 1h1v1h-1zM14 2h1v1h-1z" fill="#ea3944"/><path d="M13 0h1v1h-1zM15 0h1v1h-1zM13 2h1v1h-1zM15 2h1v1h-1z" fill="#ea3944" opacity="0.75"/><path d="M14 1h1v1h-1z" fill="#fff" opacity="0.65"/></svg>
<div class="t tr" style="left:86px;top:552px">Klimaanlage (simpel), Deutschland, Klimazone 14</div>
<svg class="a" style="left:65px;top:570px" width="16" height="14" viewBox="0 0 16 14"><path d="M1.5 11.5L8.5 5.5L14.5 6.5" fill="none" stroke="#4a7ccd" stroke-width="1.25"/><path d="M1.5 6.5L8.5 9.5L14.5 1.5" fill="none" stroke="#ea3944" stroke-width="1.3"/><path d="M1 10h1v1h-1zM0 11h1v1h-1zM2 11h1v1h-1zM1 12h1v1h-1z" fill="#4a7ccd"/><path d="M0 10h1v1h-1zM2 10h1v1h-1zM0 12h1v1h-1zM2 12h1v1h-1z" fill="#4a7ccd" opacity="0.75"/><path d="M1 11h1v1h-1z" fill="#fff" opacity="0.65"/><path d="M8 4h1v1h-1zM7 5h1v1h-1zM9 5h1v1h-1zM8 6h1v1h-1z" fill="#4a7ccd"/><path d="M7 4h1v1h-1zM9 4h1v1h-1zM7 6h1v1h-1zM9 6h1v1h-1z" fill="#4a7ccd" opacity="0.75"/><path d="M8 5h1v1h-1z" fill="#fff" opacity="0.65"/><path d="M14 5h1v1h-1zM13 6h1v1h-1zM15 6h1v1h-1zM14 7h1v1h-1z" fill="#4a7ccd"/><path d="M13 5h1v1h-1zM15 5h1v1h-1zM13 7h1v1h-1zM15 7h1v1h-1z" fill="#4a7ccd" opacity="0.75"/><path d="M14 6h1v1h-1z" fill="#fff" opacity="0.65"/><path d="M1 5h1v1h-1zM0 6h1v1h-1zM2 6h1v1h-1zM1 7h1v1h-1z" fill="#ea3944"/><path d="M0 5h1v1h-1zM2 5h1v1h-1zM0 7h1v1h-1zM2 7h1v1h-1z" fill="#ea3944" opacity="0.75"/><path d="M1 6h1v1h-1z" fill="#fff" opacity="0.65"/><path d="M8 8h1v1h-1zM7 9h1v1h-1zM9 9h1v1h-1zM8 10h1v1h-1z" fill="#ea3944"/><path d="M7 8h1v1h-1zM9 8h1v1h-1zM7 10h1v1h-1zM9 10h1v1h-1z" fill="#ea3944" opacity="0.75"/><path d="M8 9h1v1h-1z" fill="#fff" opacity="0.65"/><path d="M14 0h1v1h-1zM13 1h1v1h-1zM15 1h1v1h-1zM14 2h1v1h-1z" fill="#ea3944"/><path d="M13 0h1v1h-1zM15 0h1v1h-1zM13 2h1v1h-1zM15 2h1v1h-1z" fill="#ea3944" opacity="0.75"/><path d="M14 1h1v1h-1z" fill="#fff" opacity="0.65"/></svg>
<div class="t tr" style="left:86px;top:572px">Klimaanlage (simpel), Deutschland, Klimazone 15</div>
<svg class="a" style="left:65px;top:590px" width="16" height="14" viewBox="0 0 16 14"><path d="M1.5 11.5L8.5 5.5L14.5 6.5" fill="none" stroke="#4a7ccd" stroke-width="1.25"/><path d="M1.5 6.5L8.5 9.5L14.5 1.5" fill="none" stroke="#ea3944" stroke-width="1.3"/><path d="M1 10h1v1h-1zM0 11h1v1h-1zM2 11h1v1h-1zM1 12h1v1h-1z" fill="#4a7ccd"/><path d="M0 10h1v1h-1zM2 10h1v1h-1zM0 12h1v1h-1zM2 12h1v1h-1z" fill="#4a7ccd" opacity="0.75"/><path d="M1 11h1v1h-1z" fill="#fff" opacity="0.65"/><path d="M8 4h1v1h-1zM7 5h1v1h-1zM9 5h1v1h-1zM8 6h1v1h-1z" fill="#4a7ccd"/><path d="M7 4h1v1h-1zM9 4h1v1h-1zM7 6h1v1h-1zM9 6h1v1h-1z" fill="#4a7ccd" opacity="0.75"/><path d="M8 5h1v1h-1z" fill="#fff" opacity="0.65"/><path d="M14 5h1v1h-1zM13 6h1v1h-1zM15 6h1v1h-1zM14 7h1v1h-1z" fill="#4a7ccd"/><path d="M13 5h1v1h-1zM15 5h1v1h-1zM13 7h1v1h-1zM15 7h1v1h-1z" fill="#4a7ccd" opacity="0.75"/><path d="M14 6h1v1h-1z" fill="#fff" opacity="0.65"/><path d="M1 5h1v1h-1zM0 6h1v1h-1zM2 6h1v1h-1zM1 7h1v1h-1z" fill="#ea3944"/><path d="M0 5h1v1h-1zM2 5h1v1h-1zM0 7h1v1h-1zM2 7h1v1h-1z" fill="#ea3944" opacity="0.75"/><path d="M1 6h1v1h-1z" fill="#fff" opacity="0.65"/><path d="M8 8h1v1h-1zM7 9h1v1h-1zM9 9h1v1h-1zM8 10h1v1h-1z" fill="#ea3944"/><path d="M7 8h1v1h-1zM9 8h1v1h-1zM7 10h1v1h-1zM9 10h1v1h-1z" fill="#ea3944" opacity="0.75"/><path d="M8 9h1v1h-1z" fill="#fff" opacity="0.65"/><path d="M14 0h1v1h-1zM13 1h1v1h-1zM15 1h1v1h-1zM14 2h1v1h-1z" fill="#ea3944"/><path d="M13 0h1v1h-1zM15 0h1v1h-1zM13 2h1v1h-1zM15 2h1v1h-1z" fill="#ea3944" opacity="0.75"/><path d="M14 1h1v1h-1z" fill="#fff" opacity="0.65"/></svg>
<div class="t tr" style="left:86px;top:592px">Klimaanlage (simpel), Frankreich, Paris</div>
<svg class="a" style="left:65px;top:610px" width="16" height="14" viewBox="0 0 16 14"><path d="M1.5 11.5L8.5 5.5L14.5 6.5" fill="none" stroke="#4a7ccd" stroke-width="1.25"/><path d="M1.5 6.5L8.5 9.5L14.5 1.5" fill="none" stroke="#ea3944" stroke-width="1.3"/><path d="M1 10h1v1h-1zM0 11h1v1h-1zM2 11h1v1h-1zM1 12h1v1h-1z" fill="#4a7ccd"/><path d="M0 10h1v1h-1zM2 10h1v1h-1zM0 12h1v1h-1zM2 12h1v1h-1z" fill="#4a7ccd" opacity="0.75"/><path d="M1 11h1v1h-1z" fill="#fff" opacity="0.65"/><path d="M8 4h1v1h-1zM7 5h1v1h-1zM9 5h1v1h-1zM8 6h1v1h-1z" fill="#4a7ccd"/><path d="M7 4h1v1h-1zM9 4h1v1h-1zM7 6h1v1h-1zM9 6h1v1h-1z" fill="#4a7ccd" opacity="0.75"/><path d="M8 5h1v1h-1z" fill="#fff" opacity="0.65"/><path d="M14 5h1v1h-1zM13 6h1v1h-1zM15 6h1v1h-1zM14 7h1v1h-1z" fill="#4a7ccd"/><path d="M13 5h1v1h-1zM15 5h1v1h-1zM13 7h1v1h-1zM15 7h1v1h-1z" fill="#4a7ccd" opacity="0.75"/><path d="M14 6h1v1h-1z" fill="#fff" opacity="0.65"/><path d="M1 5h1v1h-1zM0 6h1v1h-1zM2 6h1v1h-1zM1 7h1v1h-1z" fill="#ea3944"/><path d="M0 5h1v1h-1zM2 5h1v1h-1zM0 7h1v1h-1zM2 7h1v1h-1z" fill="#ea3944" opacity="0.75"/><path d="M1 6h1v1h-1z" fill="#fff" opacity="0.65"/><path d="M8 8h1v1h-1zM7 9h1v1h-1zM9 9h1v1h-1zM8 10h1v1h-1z" fill="#ea3944"/><path d="M7 8h1v1h-1zM9 8h1v1h-1zM7 10h1v1h-1zM9 10h1v1h-1z" fill="#ea3944" opacity="0.75"/><path d="M8 9h1v1h-1z" fill="#fff" opacity="0.65"/><path d="M14 0h1v1h-1zM13 1h1v1h-1zM15 1h1v1h-1zM14 2h1v1h-1z" fill="#ea3944"/><path d="M13 0h1v1h-1zM15 0h1v1h-1zM13 2h1v1h-1zM15 2h1v1h-1z" fill="#ea3944" opacity="0.75"/><path d="M14 1h1v1h-1z" fill="#fff" opacity="0.65"/></svg>
<div class="t tr" style="left:86px;top:612px">Klimaanlage (simpel), Iran, Teheran</div>
<svg class="a" style="left:65px;top:630px" width="16" height="14" viewBox="0 0 16 14"><path d="M1.5 11.5L8.5 5.5L14.5 6.5" fill="none" stroke="#4a7ccd" stroke-width="1.25"/><path d="M1.5 6.5L8.5 9.5L14.5 1.5" fill="none" stroke="#ea3944" stroke-width="1.3"/><path d="M1 10h1v1h-1zM0 11h1v1h-1zM2 11h1v1h-1zM1 12h1v1h-1z" fill="#4a7ccd"/><path d="M0 10h1v1h-1zM2 10h1v1h-1zM0 12h1v1h-1zM2 12h1v1h-1z" fill="#4a7ccd" opacity="0.75"/><path d="M1 11h1v1h-1z" fill="#fff" opacity="0.65"/><path d="M8 4h1v1h-1zM7 5h1v1h-1zM9 5h1v1h-1zM8 6h1v1h-1z" fill="#4a7ccd"/><path d="M7 4h1v1h-1zM9 4h1v1h-1zM7 6h1v1h-1zM9 6h1v1h-1z" fill="#4a7ccd" opacity="0.75"/><path d="M8 5h1v1h-1z" fill="#fff" opacity="0.65"/><path d="M14 5h1v1h-1zM13 6h1v1h-1zM15 6h1v1h-1zM14 7h1v1h-1z" fill="#4a7ccd"/><path d="M13 5h1v1h-1zM15 5h1v1h-1zM13 7h1v1h-1zM15 7h1v1h-1z" fill="#4a7ccd" opacity="0.75"/><path d="M14 6h1v1h-1z" fill="#fff" opacity="0.65"/><path d="M1 5h1v1h-1zM0 6h1v1h-1zM2 6h1v1h-1zM1 7h1v1h-1z" fill="#ea3944"/><path d="M0 5h1v1h-1zM2 5h1v1h-1zM0 7h1v1h-1zM2 7h1v1h-1z" fill="#ea3944" opacity="0.75"/><path d="M1 6h1v1h-1z" fill="#fff" opacity="0.65"/><path d="M8 8h1v1h-1zM7 9h1v1h-1zM9 9h1v1h-1zM8 10h1v1h-1z" fill="#ea3944"/><path d="M7 8h1v1h-1zM9 8h1v1h-1zM7 10h1v1h-1zM9 10h1v1h-1z" fill="#ea3944" opacity="0.75"/><path d="M8 9h1v1h-1z" fill="#fff" opacity="0.65"/><path d="M14 0h1v1h-1zM13 1h1v1h-1zM15 1h1v1h-1zM14 2h1v1h-1z" fill="#ea3944"/><path d="M13 0h1v1h-1zM15 0h1v1h-1zM13 2h1v1h-1zM15 2h1v1h-1z" fill="#ea3944" opacity="0.75"/><path d="M14 1h1v1h-1z" fill="#fff" opacity="0.65"/></svg>
<div class="t tr" style="left:86px;top:632px">Klimaanlage (simpel), Kroatien, Zagreb</div>
<svg class="a" style="left:65px;top:650px" width="16" height="14" viewBox="0 0 16 14"><path d="M1.5 11.5L8.5 5.5L14.5 6.5" fill="none" stroke="#4a7ccd" stroke-width="1.25"/><path d="M1.5 6.5L8.5 9.5L14.5 1.5" fill="none" stroke="#ea3944" stroke-width="1.3"/><path d="M1 10h1v1h-1zM0 11h1v1h-1zM2 11h1v1h-1zM1 12h1v1h-1z" fill="#4a7ccd"/><path d="M0 10h1v1h-1zM2 10h1v1h-1zM0 12h1v1h-1zM2 12h1v1h-1z" fill="#4a7ccd" opacity="0.75"/><path d="M1 11h1v1h-1z" fill="#fff" opacity="0.65"/><path d="M8 4h1v1h-1zM7 5h1v1h-1zM9 5h1v1h-1zM8 6h1v1h-1z" fill="#4a7ccd"/><path d="M7 4h1v1h-1zM9 4h1v1h-1zM7 6h1v1h-1zM9 6h1v1h-1z" fill="#4a7ccd" opacity="0.75"/><path d="M8 5h1v1h-1z" fill="#fff" opacity="0.65"/><path d="M14 5h1v1h-1zM13 6h1v1h-1zM15 6h1v1h-1zM14 7h1v1h-1z" fill="#4a7ccd"/><path d="M13 5h1v1h-1zM15 5h1v1h-1zM13 7h1v1h-1zM15 7h1v1h-1z" fill="#4a7ccd" opacity="0.75"/><path d="M14 6h1v1h-1z" fill="#fff" opacity="0.65"/><path d="M1 5h1v1h-1zM0 6h1v1h-1zM2 6h1v1h-1zM1 7h1v1h-1z" fill="#ea3944"/><path d="M0 5h1v1h-1zM2 5h1v1h-1zM0 7h1v1h-1zM2 7h1v1h-1z" fill="#ea3944" opacity="0.75"/><path d="M1 6h1v1h-1z" fill="#fff" opacity="0.65"/><path d="M8 8h1v1h-1zM7 9h1v1h-1zM9 9h1v1h-1zM8 10h1v1h-1z" fill="#ea3944"/><path d="M7 8h1v1h-1zM9 8h1v1h-1zM7 10h1v1h-1zM9 10h1v1h-1z" fill="#ea3944" opacity="0.75"/><path d="M8 9h1v1h-1z" fill="#fff" opacity="0.65"/><path d="M14 0h1v1h-1zM13 1h1v1h-1zM15 1h1v1h-1zM14 2h1v1h-1z" fill="#ea3944"/><path d="M13 0h1v1h-1zM15 0h1v1h-1zM13 2h1v1h-1zM15 2h1v1h-1z" fill="#ea3944" opacity="0.75"/><path d="M14 1h1v1h-1z" fill="#fff" opacity="0.65"/></svg>
<div class="t tr" style="left:86px;top:652px">Klimaanlage (simpel), Niederlande, Amsterdam</div>
<svg class="a" style="left:65px;top:670px" width="16" height="14" viewBox="0 0 16 14"><path d="M1.5 11.5L8.5 5.5L14.5 6.5" fill="none" stroke="#4a7ccd" stroke-width="1.25"/><path d="M1.5 6.5L8.5 9.5L14.5 1.5" fill="none" stroke="#ea3944" stroke-width="1.3"/><path d="M1 10h1v1h-1zM0 11h1v1h-1zM2 11h1v1h-1zM1 12h1v1h-1z" fill="#4a7ccd"/><path d="M0 10h1v1h-1zM2 10h1v1h-1zM0 12h1v1h-1zM2 12h1v1h-1z" fill="#4a7ccd" opacity="0.75"/><path d="M1 11h1v1h-1z" fill="#fff" opacity="0.65"/><path d="M8 4h1v1h-1zM7 5h1v1h-1zM9 5h1v1h-1zM8 6h1v1h-1z" fill="#4a7ccd"/><path d="M7 4h1v1h-1zM9 4h1v1h-1zM7 6h1v1h-1zM9 6h1v1h-1z" fill="#4a7ccd" opacity="0.75"/><path d="M8 5h1v1h-1z" fill="#fff" opacity="0.65"/><path d="M14 5h1v1h-1zM13 6h1v1h-1zM15 6h1v1h-1zM14 7h1v1h-1z" fill="#4a7ccd"/><path d="M13 5h1v1h-1zM15 5h1v1h-1zM13 7h1v1h-1zM15 7h1v1h-1z" fill="#4a7ccd" opacity="0.75"/><path d="M14 6h1v1h-1z" fill="#fff" opacity="0.65"/><path d="M1 5h1v1h-1zM0 6h1v1h-1zM2 6h1v1h-1zM1 7h1v1h-1z" fill="#ea3944"/><path d="M0 5h1v1h-1zM2 5h1v1h-1zM0 7h1v1h-1zM2 7h1v1h-1z" fill="#ea3944" opacity="0.75"/><path d="M1 6h1v1h-1z" fill="#fff" opacity="0.65"/><path d="M8 8h1v1h-1zM7 9h1v1h-1zM9 9h1v1h-1zM8 10h1v1h-1z" fill="#ea3944"/><path d="M7 8h1v1h-1zM9 8h1v1h-1zM7 10h1v1h-1zM9 10h1v1h-1z" fill="#ea3944" opacity="0.75"/><path d="M8 9h1v1h-1z" fill="#fff" opacity="0.65"/><path d="M14 0h1v1h-1zM13 1h1v1h-1zM15 1h1v1h-1zM14 2h1v1h-1z" fill="#ea3944"/><path d="M13 0h1v1h-1zM15 0h1v1h-1zM13 2h1v1h-1zM15 2h1v1h-1z" fill="#ea3944" opacity="0.75"/><path d="M14 1h1v1h-1z" fill="#fff" opacity="0.65"/></svg>
<div class="t tr" style="left:86px;top:672px">Klimaanlage (simpel), Österreich, Wien</div>
<svg class="a" style="left:65px;top:690px" width="16" height="14" viewBox="0 0 16 14"><path d="M1.5 11.5L8.5 5.5L14.5 6.5" fill="none" stroke="#4a7ccd" stroke-width="1.25"/><path d="M1.5 6.5L8.5 9.5L14.5 1.5" fill="none" stroke="#ea3944" stroke-width="1.3"/><path d="M1 10h1v1h-1zM0 11h1v1h-1zM2 11h1v1h-1zM1 12h1v1h-1z" fill="#4a7ccd"/><path d="M0 10h1v1h-1zM2 10h1v1h-1zM0 12h1v1h-1zM2 12h1v1h-1z" fill="#4a7ccd" opacity="0.75"/><path d="M1 11h1v1h-1z" fill="#fff" opacity="0.65"/><path d="M8 4h1v1h-1zM7 5h1v1h-1zM9 5h1v1h-1zM8 6h1v1h-1z" fill="#4a7ccd"/><path d="M7 4h1v1h-1zM9 4h1v1h-1zM7 6h1v1h-1zM9 6h1v1h-1z" fill="#4a7ccd" opacity="0.75"/><path d="M8 5h1v1h-1z" fill="#fff" opacity="0.65"/><path d="M14 5h1v1h-1zM13 6h1v1h-1zM15 6h1v1h-1zM14 7h1v1h-1z" fill="#4a7ccd"/><path d="M13 5h1v1h-1zM15 5h1v1h-1zM13 7h1v1h-1zM15 7h1v1h-1z" fill="#4a7ccd" opacity="0.75"/><path d="M14 6h1v1h-1z" fill="#fff" opacity="0.65"/><path d="M1 5h1v1h-1zM0 6h1v1h-1zM2 6h1v1h-1zM1 7h1v1h-1z" fill="#ea3944"/><path d="M0 5h1v1h-1zM2 5h1v1h-1zM0 7h1v1h-1zM2 7h1v1h-1z" fill="#ea3944" opacity="0.75"/><path d="M1 6h1v1h-1z" fill="#fff" opacity="0.65"/><path d="M8 8h1v1h-1zM7 9h1v1h-1zM9 9h1v1h-1zM8 10h1v1h-1z" fill="#ea3944"/><path d="M7 8h1v1h-1zM9 8h1v1h-1zM7 10h1v1h-1zM9 10h1v1h-1z" fill="#ea3944" opacity="0.75"/><path d="M8 9h1v1h-1z" fill="#fff" opacity="0.65"/><path d="M14 0h1v1h-1zM13 1h1v1h-1zM15 1h1v1h-1zM14 2h1v1h-1z" fill="#ea3944"/><path d="M13 0h1v1h-1zM15 0h1v1h-1zM13 2h1v1h-1zM15 2h1v1h-1z" fill="#ea3944" opacity="0.75"/><path d="M14 1h1v1h-1z" fill="#fff" opacity="0.65"/></svg>
<div class="t tr" style="left:86px;top:692px">Klimaanlage (simpel), Polen, Warszawa</div>
<svg class="a" style="left:65px;top:710px" width="16" height="14" viewBox="0 0 16 14"><path d="M1.5 11.5L8.5 5.5L14.5 6.5" fill="none" stroke="#4a7ccd" stroke-width="1.25"/><path d="M1.5 6.5L8.5 9.5L14.5 1.5" fill="none" stroke="#ea3944" stroke-width="1.3"/><path d="M1 10h1v1h-1zM0 11h1v1h-1zM2 11h1v1h-1zM1 12h1v1h-1z" fill="#4a7ccd"/><path d="M0 10h1v1h-1zM2 10h1v1h-1zM0 12h1v1h-1zM2 12h1v1h-1z" fill="#4a7ccd" opacity="0.75"/><path d="M1 11h1v1h-1z" fill="#fff" opacity="0.65"/><path d="M8 4h1v1h-1zM7 5h1v1h-1zM9 5h1v1h-1zM8 6h1v1h-1z" fill="#4a7ccd"/><path d="M7 4h1v1h-1zM9 4h1v1h-1zM7 6h1v1h-1zM9 6h1v1h-1z" fill="#4a7ccd" opacity="0.75"/><path d="M8 5h1v1h-1z" fill="#fff" opacity="0.65"/><path d="M14 5h1v1h-1zM13 6h1v1h-1zM15 6h1v1h-1zM14 7h1v1h-1z" fill="#4a7ccd"/><path d="M13 5h1v1h-1zM15 5h1v1h-1zM13 7h1v1h-1zM15 7h1v1h-1z" fill="#4a7ccd" opacity="0.75"/><path d="M14 6h1v1h-1z" fill="#fff" opacity="0.65"/><path d="M1 5h1v1h-1zM0 6h1v1h-1zM2 6h1v1h-1zM1 7h1v1h-1z" fill="#ea3944"/><path d="M0 5h1v1h-1zM2 5h1v1h-1zM0 7h1v1h-1zM2 7h1v1h-1z" fill="#ea3944" opacity="0.75"/><path d="M1 6h1v1h-1z" fill="#fff" opacity="0.65"/><path d="M8 8h1v1h-1zM7 9h1v1h-1zM9 9h1v1h-1zM8 10h1v1h-1z" fill="#ea3944"/><path d="M7 8h1v1h-1zM9 8h1v1h-1zM7 10h1v1h-1zM9 10h1v1h-1z" fill="#ea3944" opacity="0.75"/><path d="M8 9h1v1h-1z" fill="#fff" opacity="0.65"/><path d="M14 0h1v1h-1zM13 1h1v1h-1zM15 1h1v1h-1zM14 2h1v1h-1z" fill="#ea3944"/><path d="M13 0h1v1h-1zM15 0h1v1h-1zM13 2h1v1h-1zM15 2h1v1h-1z" fill="#ea3944" opacity="0.75"/><path d="M14 1h1v1h-1z" fill="#fff" opacity="0.65"/></svg>
<div class="t tr" style="left:86px;top:712px">Klimaanlage (simpel), Portugal, Lisboa</div>
<svg class="a" style="left:65px;top:730px" width="16" height="14" viewBox="0 0 16 14"><path d="M1.5 11.5L8.5 5.5L14.5 6.5" fill="none" stroke="#4a7ccd" stroke-width="1.25"/><path d="M1.5 6.5L8.5 9.5L14.5 1.5" fill="none" stroke="#ea3944" stroke-width="1.3"/><path d="M1 10h1v1h-1zM0 11h1v1h-1zM2 11h1v1h-1zM1 12h1v1h-1z" fill="#4a7ccd"/><path d="M0 10h1v1h-1zM2 10h1v1h-1zM0 12h1v1h-1zM2 12h1v1h-1z" fill="#4a7ccd" opacity="0.75"/><path d="M1 11h1v1h-1z" fill="#fff" opacity="0.65"/><path d="M8 4h1v1h-1zM7 5h1v1h-1zM9 5h1v1h-1zM8 6h1v1h-1z" fill="#4a7ccd"/><path d="M7 4h1v1h-1zM9 4h1v1h-1zM7 6h1v1h-1zM9 6h1v1h-1z" fill="#4a7ccd" opacity="0.75"/><path d="M8 5h1v1h-1z" fill="#fff" opacity="0.65"/><path d="M14 5h1v1h-1zM13 6h1v1h-1zM15 6h1v1h-1zM14 7h1v1h-1z" fill="#4a7ccd"/><path d="M13 5h1v1h-1zM15 5h1v1h-1zM13 7h1v1h-1zM15 7h1v1h-1z" fill="#4a7ccd" opacity="0.75"/><path d="M14 6h1v1h-1z" fill="#fff" opacity="0.65"/><path d="M1 5h1v1h-1zM0 6h1v1h-1zM2 6h1v1h-1zM1 7h1v1h-1z" fill="#ea3944"/><path d="M0 5h1v1h-1zM2 5h1v1h-1zM0 7h1v1h-1zM2 7h1v1h-1z" fill="#ea3944" opacity="0.75"/><path d="M1 6h1v1h-1z" fill="#fff" opacity="0.65"/><path d="M8 8h1v1h-1zM7 9h1v1h-1zM9 9h1v1h-1zM8 10h1v1h-1z" fill="#ea3944"/><path d="M7 8h1v1h-1zM9 8h1v1h-1zM7 10h1v1h-1zM9 10h1v1h-1z" fill="#ea3944" opacity="0.75"/><path d="M8 9h1v1h-1z" fill="#fff" opacity="0.65"/><path d="M14 0h1v1h-1zM13 1h1v1h-1zM15 1h1v1h-1zM14 2h1v1h-1z" fill="#ea3944"/><path d="M13 0h1v1h-1zM15 0h1v1h-1zM13 2h1v1h-1zM15 2h1v1h-1z" fill="#ea3944" opacity="0.75"/><path d="M14 1h1v1h-1z" fill="#fff" opacity="0.65"/></svg>
<div class="t tr" style="left:86px;top:732px">Klimaanlage (simpel), Schweden, Stockholm</div>
<svg class="a" style="left:65px;top:750px" width="16" height="14" viewBox="0 0 16 14"><path d="M1.5 11.5L8.5 5.5L14.5 6.5" fill="none" stroke="#4a7ccd" stroke-width="1.25"/><path d="M1.5 6.5L8.5 9.5L14.5 1.5" fill="none" stroke="#ea3944" stroke-width="1.3"/><path d="M1 10h1v1h-1zM0 11h1v1h-1zM2 11h1v1h-1zM1 12h1v1h-1z" fill="#4a7ccd"/><path d="M0 10h1v1h-1zM2 10h1v1h-1zM0 12h1v1h-1zM2 12h1v1h-1z" fill="#4a7ccd" opacity="0.75"/><path d="M1 11h1v1h-1z" fill="#fff" opacity="0.65"/><path d="M8 4h1v1h-1zM7 5h1v1h-1zM9 5h1v1h-1zM8 6h1v1h-1z" fill="#4a7ccd"/><path d="M7 4h1v1h-1zM9 4h1v1h-1zM7 6h1v1h-1zM9 6h1v1h-1z" fill="#4a7ccd" opacity="0.75"/><path d="M8 5h1v1h-1z" fill="#fff" opacity="0.65"/><path d="M14 5h1v1h-1zM13 6h1v1h-1zM15 6h1v1h-1zM14 7h1v1h-1z" fill="#4a7ccd"/><path d="M13 5h1v1h-1zM15 5h1v1h-1zM13 7h1v1h-1zM15 7h1v1h-1z" fill="#4a7ccd" opacity="0.75"/><path d="M14 6h1v1h-1z" fill="#fff" opacity="0.65"/><path d="M1 5h1v1h-1zM0 6h1v1h-1zM2 6h1v1h-1zM1 7h1v1h-1z" fill="#ea3944"/><path d="M0 5h1v1h-1zM2 5h1v1h-1zM0 7h1v1h-1zM2 7h1v1h-1z" fill="#ea3944" opacity="0.75"/><path d="M1 6h1v1h-1z" fill="#fff" opacity="0.65"/><path d="M8 8h1v1h-1zM7 9h1v1h-1zM9 9h1v1h-1zM8 10h1v1h-1z" fill="#ea3944"/><path d="M7 8h1v1h-1zM9 8h1v1h-1zM7 10h1v1h-1zM9 10h1v1h-1z" fill="#ea3944" opacity="0.75"/><path d="M8 9h1v1h-1z" fill="#fff" opacity="0.65"/><path d="M14 0h1v1h-1zM13 1h1v1h-1zM15 1h1v1h-1zM14 2h1v1h-1z" fill="#ea3944"/><path d="M13 0h1v1h-1zM15 0h1v1h-1zM13 2h1v1h-1zM15 2h1v1h-1z" fill="#ea3944" opacity="0.75"/><path d="M14 1h1v1h-1z" fill="#fff" opacity="0.65"/></svg>
<div class="t tr" style="left:86px;top:752px">Klimaanlage (simpel), Schweiz, Zürich</div>
<svg class="a" style="left:65px;top:770px" width="16" height="14" viewBox="0 0 16 14"><path d="M1.5 11.5L8.5 5.5L14.5 6.5" fill="none" stroke="#4a7ccd" stroke-width="1.25"/><path d="M1.5 6.5L8.5 9.5L14.5 1.5" fill="none" stroke="#ea3944" stroke-width="1.3"/><path d="M1 10h1v1h-1zM0 11h1v1h-1zM2 11h1v1h-1zM1 12h1v1h-1z" fill="#4a7ccd"/><path d="M0 10h1v1h-1zM2 10h1v1h-1zM0 12h1v1h-1zM2 12h1v1h-1z" fill="#4a7ccd" opacity="0.75"/><path d="M1 11h1v1h-1z" fill="#fff" opacity="0.65"/><path d="M8 4h1v1h-1zM7 5h1v1h-1zM9 5h1v1h-1zM8 6h1v1h-1z" fill="#4a7ccd"/><path d="M7 4h1v1h-1zM9 4h1v1h-1zM7 6h1v1h-1zM9 6h1v1h-1z" fill="#4a7ccd" opacity="0.75"/><path d="M8 5h1v1h-1z" fill="#fff" opacity="0.65"/><path d="M14 5h1v1h-1zM13 6h1v1h-1zM15 6h1v1h-1zM14 7h1v1h-1z" fill="#4a7ccd"/><path d="M13 5h1v1h-1zM15 5h1v1h-1zM13 7h1v1h-1zM15 7h1v1h-1z" fill="#4a7ccd" opacity="0.75"/><path d="M14 6h1v1h-1z" fill="#fff" opacity="0.65"/><path d="M1 5h1v1h-1zM0 6h1v1h-1zM2 6h1v1h-1zM1 7h1v1h-1z" fill="#ea3944"/><path d="M0 5h1v1h-1zM2 5h1v1h-1zM0 7h1v1h-1zM2 7h1v1h-1z" fill="#ea3944" opacity="0.75"/><path d="M1 6h1v1h-1z" fill="#fff" opacity="0.65"/><path d="M8 8h1v1h-1zM7 9h1v1h-1zM9 9h1v1h-1zM8 10h1v1h-1z" fill="#ea3944"/><path d="M7 8h1v1h-1zM9 8h1v1h-1zM7 10h1v1h-1zM9 10h1v1h-1z" fill="#ea3944" opacity="0.75"/><path d="M8 9h1v1h-1z" fill="#fff" opacity="0.65"/><path d="M14 0h1v1h-1zM13 1h1v1h-1zM15 1h1v1h-1zM14 2h1v1h-1z" fill="#ea3944"/><path d="M13 0h1v1h-1zM15 0h1v1h-1zM13 2h1v1h-1zM15 2h1v1h-1z" fill="#ea3944" opacity="0.75"/><path d="M14 1h1v1h-1z" fill="#fff" opacity="0.65"/></svg>
<div class="t tr" style="left:86px;top:772px">Klimaanlage (simpel), Spanien, Madrid</div>
<svg class="a" style="left:65px;top:790px" width="16" height="14" viewBox="0 0 16 14"><path d="M1.5 11.5L8.5 5.5L14.5 6.5" fill="none" stroke="#4a7ccd" stroke-width="1.25"/><path d="M1.5 6.5L8.5 9.5L14.5 1.5" fill="none" stroke="#ea3944" stroke-width="1.3"/><path d="M1 10h1v1h-1zM0 11h1v1h-1zM2 11h1v1h-1zM1 12h1v1h-1z" fill="#4a7ccd"/><path d="M0 10h1v1h-1zM2 10h1v1h-1zM0 12h1v1h-1zM2 12h1v1h-1z" fill="#4a7ccd" opacity="0.75"/><path d="M1 11h1v1h-1z" fill="#fff" opacity="0.65"/><path d="M8 4h1v1h-1zM7 5h1v1h-1zM9 5h1v1h-1zM8 6h1v1h-1z" fill="#4a7ccd"/><path d="M7 4h1v1h-1zM9 4h1v1h-1zM7 6h1v1h-1zM9 6h1v1h-1z" fill="#4a7ccd" opacity="0.75"/><path d="M8 5h1v1h-1z" fill="#fff" opacity="0.65"/><path d="M14 5h1v1h-1zM13 6h1v1h-1zM15 6h1v1h-1zM14 7h1v1h-1z" fill="#4a7ccd"/><path d="M13 5h1v1h-1zM15 5h1v1h-1zM13 7h1v1h-1zM15 7h1v1h-1z" fill="#4a7ccd" opacity="0.75"/><path d="M14 6h1v1h-1z" fill="#fff" opacity="0.65"/><path d="M1 5h1v1h-1zM0 6h1v1h-1zM2 6h1v1h-1zM1 7h1v1h-1z" fill="#ea3944"/><path d="M0 5h1v1h-1zM2 5h1v1h-1zM0 7h1v1h-1zM2 7h1v1h-1z" fill="#ea3944" opacity="0.75"/><path d="M1 6h1v1h-1z" fill="#fff" opacity="0.65"/><path d="M8 8h1v1h-1zM7 9h1v1h-1zM9 9h1v1h-1zM8 10h1v1h-1z" fill="#ea3944"/><path d="M7 8h1v1h-1zM9 8h1v1h-1zM7 10h1v1h-1zM9 10h1v1h-1z" fill="#ea3944" opacity="0.75"/><path d="M8 9h1v1h-1z" fill="#fff" opacity="0.65"/><path d="M14 0h1v1h-1zM13 1h1v1h-1zM15 1h1v1h-1zM14 2h1v1h-1z" fill="#ea3944"/><path d="M13 0h1v1h-1zM15 0h1v1h-1zM13 2h1v1h-1zM15 2h1v1h-1z" fill="#ea3944" opacity="0.75"/><path d="M14 1h1v1h-1z" fill="#fff" opacity="0.65"/></svg>
<div class="t tr" style="left:86px;top:792px">Klimaanlage (simpel), Südafrika, Pretoria</div>
<svg class="a" style="left:65px;top:810px" width="16" height="14" viewBox="0 0 16 14"><path d="M1.5 11.5L8.5 5.5L14.5 6.5" fill="none" stroke="#4a7ccd" stroke-width="1.25"/><path d="M1.5 6.5L8.5 9.5L14.5 1.5" fill="none" stroke="#ea3944" stroke-width="1.3"/><path d="M1 10h1v1h-1zM0 11h1v1h-1zM2 11h1v1h-1zM1 12h1v1h-1z" fill="#4a7ccd"/><path d="M0 10h1v1h-1zM2 10h1v1h-1zM0 12h1v1h-1zM2 12h1v1h-1z" fill="#4a7ccd" opacity="0.75"/><path d="M1 11h1v1h-1z" fill="#fff" opacity="0.65"/><path d="M8 4h1v1h-1zM7 5h1v1h-1zM9 5h1v1h-1zM8 6h1v1h-1z" fill="#4a7ccd"/><path d="M7 4h1v1h-1zM9 4h1v1h-1zM7 6h1v1h-1zM9 6h1v1h-1z" fill="#4a7ccd" opacity="0.75"/><path d="M8 5h1v1h-1z" fill="#fff" opacity="0.65"/><path d="M14 5h1v1h-1zM13 6h1v1h-1zM15 6h1v1h-1zM14 7h1v1h-1z" fill="#4a7ccd"/><path d="M13 5h1v1h-1zM15 5h1v1h-1zM13 7h1v1h-1zM15 7h1v1h-1z" fill="#4a7ccd" opacity="0.75"/><path d="M14 6h1v1h-1z" fill="#fff" opacity="0.65"/><path d="M1 5h1v1h-1zM0 6h1v1h-1zM2 6h1v1h-1zM1 7h1v1h-1z" fill="#ea3944"/><path d="M0 5h1v1h-1zM2 5h1v1h-1zM0 7h1v1h-1zM2 7h1v1h-1z" fill="#ea3944" opacity="0.75"/><path d="M1 6h1v1h-1z" fill="#fff" opacity="0.65"/><path d="M8 8h1v1h-1zM7 9h1v1h-1zM9 9h1v1h-1zM8 10h1v1h-1z" fill="#ea3944"/><path d="M7 8h1v1h-1zM9 8h1v1h-1zM7 10h1v1h-1zM9 10h1v1h-1z" fill="#ea3944" opacity="0.75"/><path d="M8 9h1v1h-1z" fill="#fff" opacity="0.65"/><path d="M14 0h1v1h-1zM13 1h1v1h-1zM15 1h1v1h-1zM14 2h1v1h-1z" fill="#ea3944"/><path d="M13 0h1v1h-1zM15 0h1v1h-1zM13 2h1v1h-1zM15 2h1v1h-1z" fill="#ea3944" opacity="0.75"/><path d="M14 1h1v1h-1z" fill="#fff" opacity="0.65"/></svg>
<div class="t tr" style="left:86px;top:812px">Klimaanlage (simpel), Tschechische Republik, Praha</div>
<svg class="a" style="left:65px;top:830px" width="16" height="14" viewBox="0 0 16 14"><path d="M1.5 11.5L8.5 5.5L14.5 6.5" fill="none" stroke="#4a7ccd" stroke-width="1.25"/><path d="M1.5 6.5L8.5 9.5L14.5 1.5" fill="none" stroke="#ea3944" stroke-width="1.3"/><path d="M1 10h1v1h-1zM0 11h1v1h-1zM2 11h1v1h-1zM1 12h1v1h-1z" fill="#4a7ccd"/><path d="M0 10h1v1h-1zM2 10h1v1h-1zM0 12h1v1h-1zM2 12h1v1h-1z" fill="#4a7ccd" opacity="0.75"/><path d="M1 11h1v1h-1z" fill="#fff" opacity="0.65"/><path d="M8 4h1v1h-1zM7 5h1v1h-1zM9 5h1v1h-1zM8 6h1v1h-1z" fill="#4a7ccd"/><path d="M7 4h1v1h-1zM9 4h1v1h-1zM7 6h1v1h-1zM9 6h1v1h-1z" fill="#4a7ccd" opacity="0.75"/><path d="M8 5h1v1h-1z" fill="#fff" opacity="0.65"/><path d="M14 5h1v1h-1zM13 6h1v1h-1zM15 6h1v1h-1zM14 7h1v1h-1z" fill="#4a7ccd"/><path d="M13 5h1v1h-1zM15 5h1v1h-1zM13 7h1v1h-1zM15 7h1v1h-1z" fill="#4a7ccd" opacity="0.75"/><path d="M14 6h1v1h-1z" fill="#fff" opacity="0.65"/><path d="M1 5h1v1h-1zM0 6h1v1h-1zM2 6h1v1h-1zM1 7h1v1h-1z" fill="#ea3944"/><path d="M0 5h1v1h-1zM2 5h1v1h-1zM0 7h1v1h-1zM2 7h1v1h-1z" fill="#ea3944" opacity="0.75"/><path d="M1 6h1v1h-1z" fill="#fff" opacity="0.65"/><path d="M8 8h1v1h-1zM7 9h1v1h-1zM9 9h1v1h-1zM8 10h1v1h-1z" fill="#ea3944"/><path d="M7 8h1v1h-1zM9 8h1v1h-1zM7 10h1v1h-1zM9 10h1v1h-1z" fill="#ea3944" opacity="0.75"/><path d="M8 9h1v1h-1z" fill="#fff" opacity="0.65"/><path d="M14 0h1v1h-1zM13 1h1v1h-1zM15 1h1v1h-1zM14 2h1v1h-1z" fill="#ea3944"/><path d="M13 0h1v1h-1zM15 0h1v1h-1zM13 2h1v1h-1zM15 2h1v1h-1z" fill="#ea3944" opacity="0.75"/><path d="M14 1h1v1h-1z" fill="#fff" opacity="0.65"/></svg>
<div class="t tr" style="left:86px;top:832px">Klimaanlage (simpel), Türkei, Ankara</div>
<svg class="a" style="left:65px;top:850px" width="16" height="14" viewBox="0 0 16 14"><path d="M1.5 11.5L8.5 5.5L14.5 6.5" fill="none" stroke="#4a7ccd" stroke-width="1.25"/><path d="M1.5 6.5L8.5 9.5L14.5 1.5" fill="none" stroke="#ea3944" stroke-width="1.3"/><path d="M1 10h1v1h-1zM0 11h1v1h-1zM2 11h1v1h-1zM1 12h1v1h-1z" fill="#4a7ccd"/><path d="M0 10h1v1h-1zM2 10h1v1h-1zM0 12h1v1h-1zM2 12h1v1h-1z" fill="#4a7ccd" opacity="0.75"/><path d="M1 11h1v1h-1z" fill="#fff" opacity="0.65"/><path d="M8 4h1v1h-1zM7 5h1v1h-1zM9 5h1v1h-1zM8 6h1v1h-1z" fill="#4a7ccd"/><path d="M7 4h1v1h-1zM9 4h1v1h-1zM7 6h1v1h-1zM9 6h1v1h-1z" fill="#4a7ccd" opacity="0.75"/><path d="M8 5h1v1h-1z" fill="#fff" opacity="0.65"/><path d="M14 5h1v1h-1zM13 6h1v1h-1zM15 6h1v1h-1zM14 7h1v1h-1z" fill="#4a7ccd"/><path d="M13 5h1v1h-1zM15 5h1v1h-1zM13 7h1v1h-1zM15 7h1v1h-1z" fill="#4a7ccd" opacity="0.75"/><path d="M14 6h1v1h-1z" fill="#fff" opacity="0.65"/><path d="M1 5h1v1h-1zM0 6h1v1h-1zM2 6h1v1h-1zM1 7h1v1h-1z" fill="#ea3944"/><path d="M0 5h1v1h-1zM2 5h1v1h-1zM0 7h1v1h-1zM2 7h1v1h-1z" fill="#ea3944" opacity="0.75"/><path d="M1 6h1v1h-1z" fill="#fff" opacity="0.65"/><path d="M8 8h1v1h-1zM7 9h1v1h-1zM9 9h1v1h-1zM8 10h1v1h-1z" fill="#ea3944"/><path d="M7 8h1v1h-1zM9 8h1v1h-1zM7 10h1v1h-1zM9 10h1v1h-1z" fill="#ea3944" opacity="0.75"/><path d="M8 9h1v1h-1z" fill="#fff" opacity="0.65"/><path d="M14 0h1v1h-1zM13 1h1v1h-1zM15 1h1v1h-1zM14 2h1v1h-1z" fill="#ea3944"/><path d="M13 0h1v1h-1zM15 0h1v1h-1zM13 2h1v1h-1zM15 2h1v1h-1z" fill="#ea3944" opacity="0.75"/><path d="M14 1h1v1h-1z" fill="#fff" opacity="0.65"/></svg>
<div class="t tr" style="left:86px;top:852px">Klimaanlage (simpel), Vereinigtes Königreich, London</div>
<div class="lbl" style="top:102px">Jahresstrombedarf</div>
<div class="a" style="left:582px;top:96px;width:93px;height:22px;border:1px solid #abd0f3;border-radius:3px;background:#fff"></div>
<div class="t" style="left:600px;top:99px;width:57px;text-align:right">280</div>
<div class="a" style="left:659px;top:97px;width:15px;height:20px;background:#f4f4f4"></div>
<div class="a" style="left:660px;top:98px;width:14px;height:9px;background:#fafafa;border:1px solid #cdcdcd;border-width:0 1px 1px 1px;border-radius:1px"></div>
<div class="a" style="left:660px;top:107px;width:14px;height:9px;background:#fafafa;border:1px solid #cdcdcd;border-width:0 1px 1px 1px;border-radius:1px"></div>
<svg class="a" style="left:664px;top:99px" width="6" height="16" viewBox="0 0 6 16"><path d="M0 4.8H5.6L2.8 1.2Z" fill="#111"/><path d="M0 11H5.6L2.8 14.6Z" fill="#111"/></svg>
<div class="t" style="left:684px;top:102px">kWh</div>
<div class="a" style="left:582px;top:127px;width:13px;height:13px;border:1px solid #707070;border-radius:3px;background:#f3f3f3"></div>
<div class="t" style="left:600px;top:128px;letter-spacing:-0.17px">Lastprofil um halbes Jahr verschieben</div>
<div class="gl" style="top:209px"></div>
<div class="gl" style="top:277px"></div>
<div class="gl" style="top:345px"></div>
<div class="gl" style="top:413px"></div>
<div class="gl" style="top:481px"></div>
<div class="yt" style="top:209px"></div>
<div class="yl" style="top:203px">60</div>
<div class="yt" style="top:277px"></div>
<div class="yl" style="top:271px">48</div>
<div class="yt" style="top:345px"></div>
<div class="yl" style="top:339px">36</div>
<div class="yt" style="top:413px"></div>
<div class="yl" style="top:407px">24</div>
<div class="yt" style="top:481px"></div>
<div class="yl" style="top:475px">12</div>
<div class="yt" style="top:550px"></div>
<div class="yl" style="top:544px">0</div>
<div class="bar" style="left:465px;top:465px;height:85px"></div>
<div class="xt" style="left:475px"></div>
<div class="xl" style="left:455px">Jan</div>
<div class="bar" style="left:513px;top:473px;height:77px"></div>
<div class="xt" style="left:523px"></div>
<div class="xl" style="left:503px">Feb</div>
<div class="bar" style="left:560px;top:465px;height:85px"></div>
<div class="xt" style="left:570px"></div>
<div class="xl" style="left:550px">Mär</div>
<div class="bar" style="left:608px;top:468px;height:82px"></div>
<div class="xt" style="left:618px"></div>
<div class="xl" style="left:598px">Apr</div>
<div class="bar" style="left:656px;top:342px;height:208px"></div>
<div class="xt" style="left:666px"></div>
<div class="xl" style="left:646px">Mai</div>
<div class="bar" style="left:704px;top:311px;height:239px"></div>
<div class="xt" style="left:714px"></div>
<div class="xl" style="left:694px">Jun</div>
<div class="bar" style="left:752px;top:229px;height:321px"></div>
<div class="xt" style="left:762px"></div>
<div class="xl" style="left:742px">Jul</div>
<div class="bar" style="left:800px;top:386px;height:164px"></div>
<div class="xt" style="left:810px"></div>
<div class="xl" style="left:790px">Aug</div>
<div class="bar" style="left:848px;top:468px;height:82px"></div>
<div class="xt" style="left:858px"></div>
<div class="xl" style="left:838px">Sep</div>
<div class="bar" style="left:895px;top:465px;height:85px"></div>
<div class="xt" style="left:905px"></div>
<div class="xl" style="left:885px">Okt</div>
<div class="bar" style="left:943px;top:468px;height:82px"></div>
<div class="xt" style="left:953px"></div>
<div class="xl" style="left:933px">Nov</div>
<div class="bar" style="left:991px;top:465px;height:85px"></div>
<div class="xt" style="left:1001px"></div>
<div class="xl" style="left:981px">Dez</div>
<div class="a" style="left:456px;top:209px;width:1px;height:342px;background:#3a3a3a"></div>
<div class="a" style="left:449px;top:550px;width:572px;height:1px;background:#3a3a3a"></div>
<div class="t" style="left:377px;top:374px;width:74px;text-align:center;transform:rotate(-90deg);color:#222;letter-spacing:-0.1px">Energie in kWh</div>
<div class="cbtn" style="top:159px"></div><div class="cbtn" style="top:189px"></div><div class="cbtn" style="top:219px"></div>
<svg class="a" style="left:1013px;top:157px" width="28" height="28" viewBox="0 0 28 28"><path d="M8.5 11V19.5H12.5" fill="none" stroke="#7898cc" stroke-width="1"/><path d="M8.5 6V12" stroke="#2f5597" stroke-width="1.1"/><path d="M6.8 7.6L8.5 5L10.2 7.6Z" fill="#2f5597"/><path d="M5.5 15.5Q8.5 10.5 12 10.2Q15 10 16.5 11.5" fill="none" stroke="#f08a98" stroke-width="1.1"/><path d="M12.5 11.5H20.5V20.5H12.5Z" fill="#f4f8fd" stroke="#a6bfe2" stroke-width="1"/><path d="M14.5 13.5H18.5V19.5H14.5Z" fill="#e6eef9" stroke="#c4d5ee" stroke-width="1"/><rect x="15" y="14.5" width="2.5" height="4" fill="#a9c2e6"/></svg>
<svg class="a" style="left:1013px;top:187px" width="28" height="28" viewBox="0 0 28 28"><path d="M6.5 7.5H18.5V18.5H6.5Z" fill="#f3f7fc" stroke="#7d9fd2" stroke-width="1"/><path d="M8 9.5H17" stroke="#ea8393" stroke-width="1"/><path d="M10 12.5H14M10 14.5H14M10 16.5H14" stroke="#b8cdea" stroke-width="1"/><path d="M8 12h1.5v1H8zM8 14h1.5v1H8zM8 16h1.5v1H8z" fill="#e46a7c"/><path d="M13.5 12.5H20.5V20.5H13.5Z" fill="#f4f8fd" stroke="#a6bfe2" stroke-width="1"/><rect x="15.5" y="14.5" width="3" height="5" fill="#c9d9f0"/></svg>
<svg class="a" style="left:1013px;top:217px" width="28" height="28" viewBox="0 0 28 28"><path d="M9 9H16.5" stroke="#7394cc" stroke-width="2"/><path d="M14.5 5.8L19 9.1L14.5 12.4Z" fill="#6486c6"/><path d="M11 16.5H18" stroke="#4a6db0" stroke-width="2"/><path d="M12.5 13.2L8 16.5L12.5 19.8Z" fill="#4a6db0"/></svg>
<div class="lbl" style="top:603px;letter-spacing:-0.35px">Bezeichnung</div>
<div class="a" style="left:581px;top:596px;width:461px;height:26px;border:1px solid #b5d4f3;border-radius:3px;background:#fff"></div>
<div class="a" style="left:587px;top:602px;width:449px;height:14px;background:#efefef"></div>
<div class="t" style="left:588px;top:602px;color:#6d6d6d;letter-spacing:-0.27px">Klimaanlage (simpel), Deutschland, Klimazone 15</div>
<div class="lbl" style="top:625px;letter-spacing:-0.4px">Kommentar</div>
<div class="a" style="left:581px;top:626px;width:461px;height:96px;border:1px solid #b5d4f3;border-radius:3px;background:#fff"></div>
<div class="a" style="left:587px;top:632px;width:449px;height:84px;background:#efefef"></div>
<div class="t" style="left:588px;top:632px;color:#6d6d6d;letter-spacing:-0.22px">Vereinfachtes Lastprofil einer Klimaanlage für den Referenzstandort Garmisch-Partenkirchen</div>
<div class="t" style="left:588px;top:645px;color:#6d6d6d;letter-spacing:-0.21px">der Klimazone 15 (Deutschland). Siehe Hilfe für Details.</div>
<div class="lbl" style="top:733px;letter-spacing:-0.2px">Anzahl Werte</div>
<div class="val" style="top:733px;letter-spacing:-0.2px">8760</div>
<div class="lbl" style="top:763px;letter-spacing:-0.2px">Anzahl Tage</div>
<div class="val" style="top:763px;letter-spacing:-0.2px">365</div>
<div class="lbl" style="top:793px;letter-spacing:-0.2px">Energieverbrauch pro Jahr</div>
<div class="val" style="top:793px;letter-spacing:-0.2px">280 kWh</div>
<div class="lbl" style="top:823px;letter-spacing:-0.2px">Letzte Aktualisierung</div>
<div class="val" style="top:823px;letter-spacing:0.1px">10.10.2025 00:00:00</div>
<div class="btn" style="left:845px;width:30px"></div>
<svg class="a" style="left:851px;top:889px" width="18" height="18" viewBox="0 0 18 18"><circle cx="9" cy="9" r="7.0" fill="none" stroke="#7094c3" stroke-width="1.7"/><path d="M6.6 7.1Q6.6 4.7 9 4.7Q11.4 4.7 11.4 6.8Q11.4 8.1 9.1 9.1V10.6" fill="none" stroke="#7094c3" stroke-width="1.5"/><rect x="8.3" y="11.8" width="1.6" height="1.6" fill="#7094c3"/></svg>
<div class="btn" style="left:883px;width:80px;letter-spacing:-0.3px">OK</div>
<div class="btn" style="left:971px;width:80px;letter-spacing:-0.2px">Abbrechen</div>
</body></html>
